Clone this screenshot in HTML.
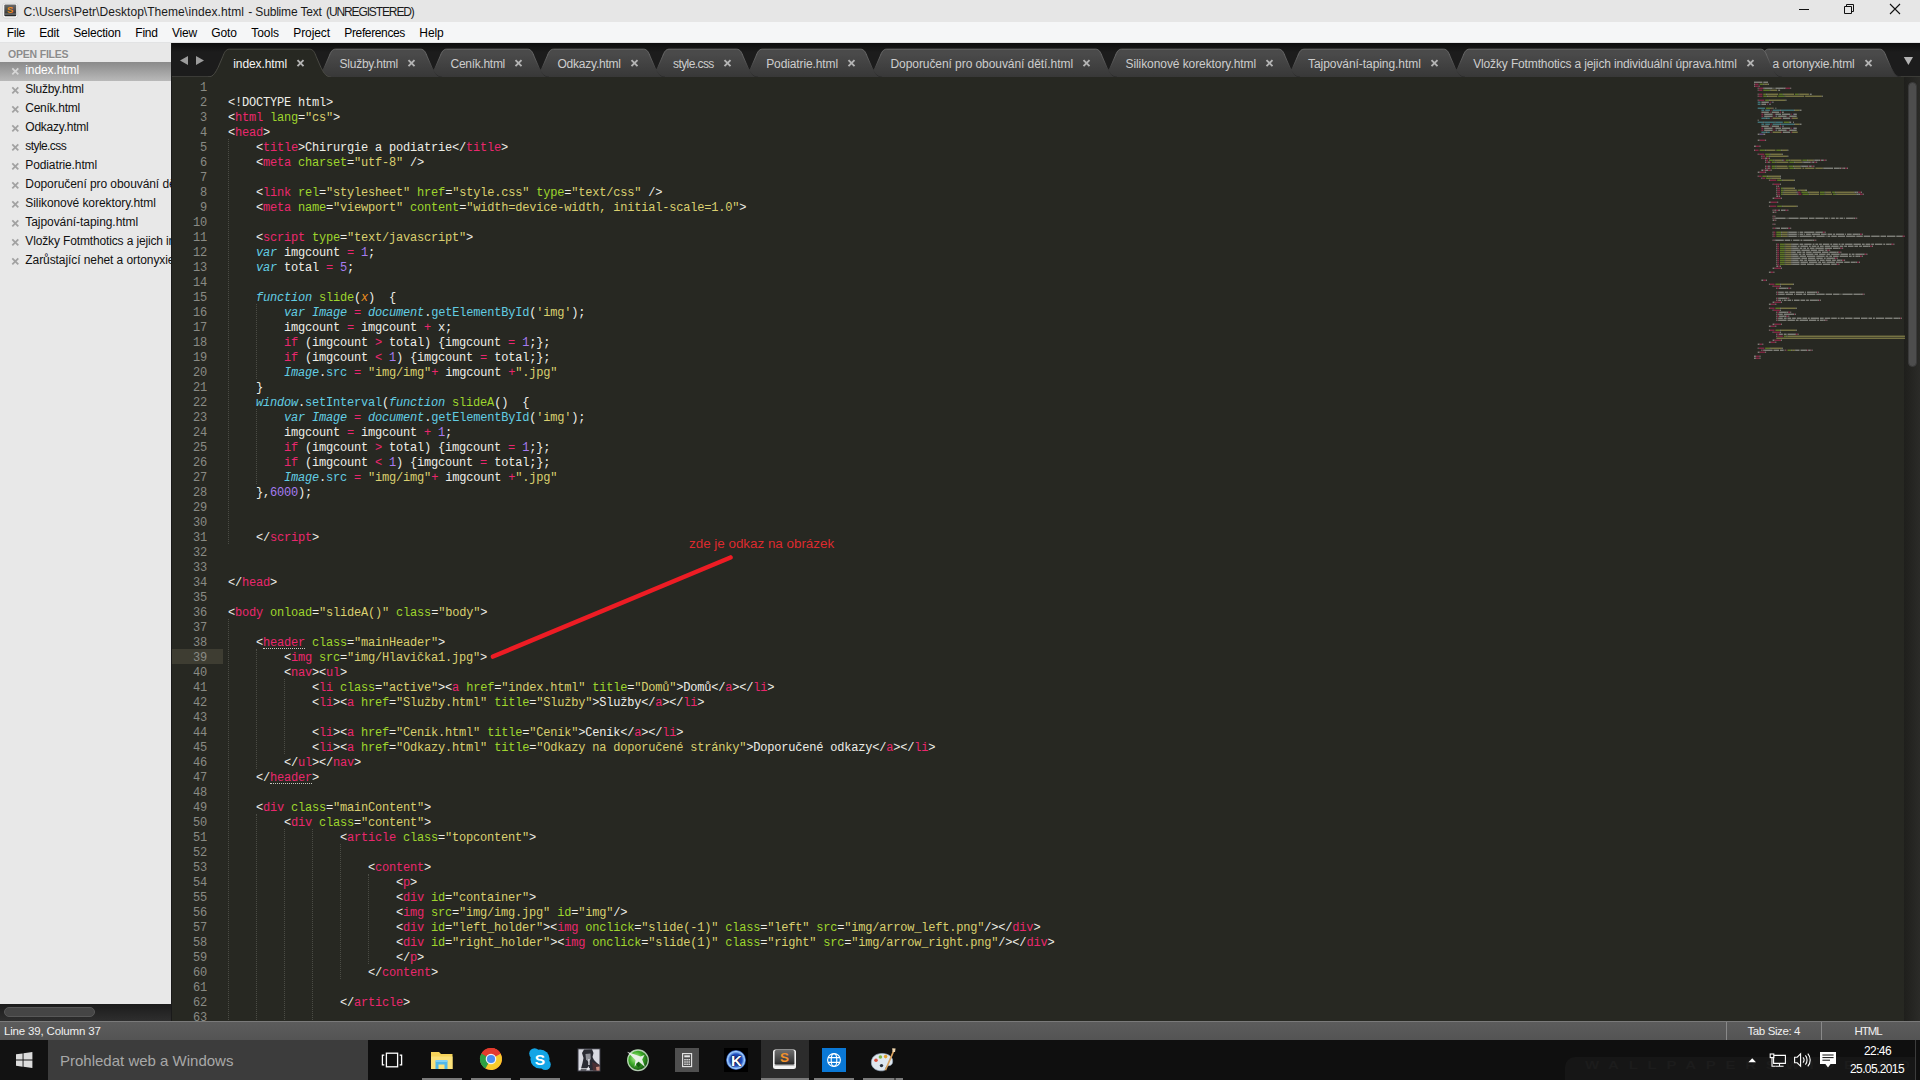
<!DOCTYPE html>
<html lang="cs">
<head>
<meta charset="utf-8">
<title>Sublime Text</title>
<style>
*{box-sizing:border-box;margin:0;padding:0}
html,body{width:1920px;height:1080px;overflow:hidden;background:#272822}
body{position:relative;font-family:"Liberation Sans",sans-serif;font-size:12px;color:#000}
.abs{position:absolute}
/* title bar */
#title{position:absolute;left:0;top:0;width:1920px;height:22px;background:#e6e6e6}
#title .txt{position:absolute;top:4px;font-size:12px;line-height:16px;color:#1a1a1a;white-space:pre}
#menu{position:absolute;left:0;top:22px;width:1920px;height:21px;background:#f5f6f7;border-bottom:1px solid #e2e3e4}
#menu span{position:absolute;top:3px;font-size:12px;line-height:16px;color:#000;white-space:nowrap}
/* sidebar */
#side{position:absolute;left:0;top:43px;width:171px;height:961px;background:#e8e8e8;overflow:hidden}
#side .hd{position:absolute;left:8px;top:4px;font-size:10.5px;line-height:14px;color:#8c8c8c;font-weight:bold;letter-spacing:-0.2px;white-space:nowrap;text-shadow:0 1px 0 #f4f4f4}
.sf{position:absolute;left:0;width:171px;height:19px;white-space:nowrap}
.sf.sel{background:linear-gradient(#8a8a8a,#9f9f9f 45%,#b9b9b9);height:19px}
.sf .sx{position:absolute;left:11.2px;top:5.2px;stroke:#a2a2a2;stroke-width:1.8;fill:none}
.sf .sn{position:absolute;left:25.3px;top:0.3px;font-size:12px;line-height:16px;color:#111}
.sf.sel .sn{color:#fff}
.sf.sel .sx{stroke:#d6d6d6}
#sidescroll{position:absolute;left:0;top:1004px;width:171px;height:17px;background:linear-gradient(#1c1c1c,#2e2e2e)}
#sidescroll i{position:absolute;left:4px;top:3px;width:91px;height:10px;border-radius:5px;background:#454545;border:1px solid #585858}
#sidesep{position:absolute;left:171px;top:43px;width:1px;height:978px;background:#1a1a1a}
/* tab bar */
#tabbar{position:absolute;left:172px;top:43px;width:1748px;height:34px;background:linear-gradient(#0d0d0d,#1c1c1c 9px,#1c1c1c);overflow:hidden}
#tabbar svg{position:absolute;left:0;top:0}
.tt{position:absolute;top:12.5px;font-size:12px;line-height:16px;white-space:nowrap}
.tx{position:absolute;top:11px;font-size:13px;line-height:16px;font-weight:bold;color:#b8b8b8}
/* editor */
#ed{position:absolute;left:172px;top:77px;width:1748px;height:944px;background:#272822;overflow:hidden}
.ln{position:absolute;left:0;height:15px;width:1580px;white-space:pre;font-family:"Liberation Mono",monospace;font-size:12px;letter-spacing:-0.2px;line-height:15px;color:#eeeee8}
.ln .no{position:absolute;left:0;top:2px;width:35px;text-align:right;color:#8a8b85}
.ln.cur::before{content:'';position:absolute;left:0;top:0;width:51px;height:15px;background:#3e3d32}
.ln .cd{position:absolute;left:56px;top:2px}
.t{color:#ea276d}.a{color:#9ed52d}.s{color:#dad06f}.k{color:#ea276d}.ki{color:#62cde2;font-style:italic}
.b{color:#62cde2}.g{color:#9ed52d}.o{color:#ee8f1f;font-style:italic}.n{color:#a67cf1}
.u{position:relative}
.u::after{content:'';position:absolute;left:0;right:0;top:12.3px;border-top:1px dotted #c8c8c0}
.gd{position:absolute;width:0;border-left:1px dotted #4b4c45}
/* status */
#status{position:absolute;left:0;top:1021px;width:1920px;height:19px;background:linear-gradient(#5c5c5c,#545454);border-top:1px solid #7a7a7a;color:#f0f0f0;font-size:11.5px}
#status span{position:absolute;top:1px;line-height:16px;white-space:nowrap}
#status i{position:absolute;top:0;width:1px;height:18px;background:#898989}
/* taskbar */
#task{position:absolute;left:0;top:1040px;width:1920px;height:40px;background:#0f0f0f}
#search{position:absolute;left:48px;top:0;width:320px;height:40px;background:#3c3c3c;color:#a8a8a8;font-size:15px;line-height:41px;padding-left:12px;white-space:nowrap}

#wc{position:absolute;left:0;top:0}
#anno{position:absolute;left:0;top:0;pointer-events:none}
#annot{position:absolute;left:689px;top:535px;font-size:13.4px;line-height:18px;color:#dc2a2e;white-space:nowrap}
#mini{position:absolute;left:1754px;top:79px}
#vtrack{position:absolute;left:1904px;top:77px;width:16px;height:944px;background:linear-gradient(90deg,#1f1f1c,#2b2b28)}
#vthumb{position:absolute;left:1908px;top:82px;width:9px;height:285px;border-radius:4.5px;background:#4d4d4d;border:1px solid #3a3a3a}
#tbi{position:absolute;left:0;top:0}
.clk{position:absolute;color:#fff;font-size:12px;line-height:14px;white-space:nowrap}
#wp{position:absolute;left:1565px;top:17px;width:350px;height:30px;border-radius:10px 0 0 0;background:#161616}
#wpt{position:absolute;left:1585px;top:20px;font-size:10px;letter-spacing:6.5px;color:#1c1c1c;font-weight:bold;white-space:nowrap;transform:scaleX(1.5);transform-origin:0 0}
</style>
</head>
<body>
<div id="title"><span class="txt" style="left:23.5px;letter-spacing:0.047px">C:\Users\Petr\Desktop\Theme\</span><span class="txt" style="left:188.4px;letter-spacing:0.091px">index.html</span><span class="txt" style="left:248.2px;letter-spacing:0.103px">-</span><span class="txt" style="left:255.3px;letter-spacing:-0.173px">Sublime Text</span><span class="txt" style="left:326.0px;letter-spacing:-1.117px">(UNREGISTERED)</span></div>
<svg id="wc" width="1920" height="23" viewBox="0 0 1920 23">
<defs><linearGradient id="sg" x1="0" y1="0" x2="0" y2="1"><stop offset="0" stop-color="#6a6a6a"/><stop offset="0.75" stop-color="#3a3a3a"/><stop offset="1" stop-color="#222"/></linearGradient></defs>
<rect x="2.8" y="3.3" width="14.9" height="14.7" rx="2.2" fill="#fdfdfd" stroke="#c4c4c4" stroke-width="0.6"/>
<rect x="4.3" y="4.6" width="11.9" height="11.6" rx="1" fill="url(#sg)"/>
<rect x="4.3" y="13.6" width="11.9" height="0.9" fill="#8e8e8e"/>
<text x="10.2" y="12.6" font-family="Liberation Sans, sans-serif" font-weight="bold" font-size="9.5" fill="#ef8a1e" text-anchor="middle">S</text>
<path d="M1799,9.5 H1809" stroke="#111" stroke-width="1"/>
<path d="M1844.5,6.5 H1851.5 V13.5 H1844.5 Z M1846.5,6.5 V4.5 H1853.5 V11.5 H1851.5" fill="none" stroke="#111" stroke-width="1"/>
<path d="M1890,4 L1900,14 M1900,4 L1890,14" stroke="#111" stroke-width="1.1"/>
</svg>
<div id="menu"><span style="left:6.8px;letter-spacing:-0.284px">File</span><span style="left:39.3px;letter-spacing:-0.245px">Edit</span><span style="left:73.3px;letter-spacing:-0.218px">Selection</span><span style="left:135.3px;letter-spacing:-0.236px">Find</span><span style="left:172.0px;letter-spacing:-0.198px">View</span><span style="left:211.3px;letter-spacing:-0.154px">Goto</span><span style="left:251.3px;letter-spacing:-0.063px">Tools</span><span style="left:293.3px;letter-spacing:-0.093px">Project</span><span style="left:344.3px;letter-spacing:-0.364px">Preferences</span><span style="left:419.3px;letter-spacing:-0.070px">Help</span></div>
<div id="side"><span class="hd">OPEN FILES</span>
<div class="sf sel" style="top:19px"><svg class="sx" width="9" height="9" viewBox="0 0 9 9"><path d="M1.3,1.3 L7.3,7.3 M7.3,1.3 L1.3,7.3"/></svg><span class="sn" style="letter-spacing:-0.099px">index.html</span></div>
<div class="sf" style="top:38px"><svg class="sx" width="9" height="9" viewBox="0 0 9 9"><path d="M1.3,1.3 L7.3,7.3 M7.3,1.3 L1.3,7.3"/></svg><span class="sn" style="letter-spacing:-0.239px">Služby.html</span></div>
<div class="sf" style="top:57px"><svg class="sx" width="9" height="9" viewBox="0 0 9 9"><path d="M1.3,1.3 L7.3,7.3 M7.3,1.3 L1.3,7.3"/></svg><span class="sn" style="letter-spacing:-0.285px">Ceník.html</span></div>
<div class="sf" style="top:76px"><svg class="sx" width="9" height="9" viewBox="0 0 9 9"><path d="M1.3,1.3 L7.3,7.3 M7.3,1.3 L1.3,7.3"/></svg><span class="sn" style="letter-spacing:-0.231px">Odkazy.html</span></div>
<div class="sf" style="top:95px"><svg class="sx" width="9" height="9" viewBox="0 0 9 9"><path d="M1.3,1.3 L7.3,7.3 M7.3,1.3 L1.3,7.3"/></svg><span class="sn" style="letter-spacing:-0.584px">style.css</span></div>
<div class="sf" style="top:114px"><svg class="sx" width="9" height="9" viewBox="0 0 9 9"><path d="M1.3,1.3 L7.3,7.3 M7.3,1.3 L1.3,7.3"/></svg><span class="sn" style="letter-spacing:-0.115px">Podiatrie.html</span></div>
<div class="sf" style="top:133px"><svg class="sx" width="9" height="9" viewBox="0 0 9 9"><path d="M1.3,1.3 L7.3,7.3 M7.3,1.3 L1.3,7.3"/></svg><span class="sn" style="letter-spacing:-0.069px">Doporučení pro obouvání dětí.html</span></div>
<div class="sf" style="top:152px"><svg class="sx" width="9" height="9" viewBox="0 0 9 9"><path d="M1.3,1.3 L7.3,7.3 M7.3,1.3 L1.3,7.3"/></svg><span class="sn" style="letter-spacing:-0.080px">Silikonové korektory.html</span></div>
<div class="sf" style="top:171px"><svg class="sx" width="9" height="9" viewBox="0 0 9 9"><path d="M1.3,1.3 L7.3,7.3 M7.3,1.3 L1.3,7.3"/></svg><span class="sn" style="letter-spacing:-0.062px">Tajpování-taping.html</span></div>
<div class="sf" style="top:190px"><svg class="sx" width="9" height="9" viewBox="0 0 9 9"><path d="M1.3,1.3 L7.3,7.3 M7.3,1.3 L1.3,7.3"/></svg><span class="sn" style="letter-spacing:-0.140px">Vložky Fotmthotics a jejich individuální úprava.html</span></div>
<div class="sf" style="top:209px"><svg class="sx" width="9" height="9" viewBox="0 0 9 9"><path d="M1.3,1.3 L7.3,7.3 M7.3,1.3 L1.3,7.3"/></svg><span class="sn" style="letter-spacing:-0.078px">Zarůstající nehet a ortonyxie.html</span></div>
</div>
<div id="sidescroll"><i></i></div>
<div id="sidesep"></div>
<div id="tabbar">
<svg width="1748" height="34" viewBox="0 0 1748 34">
<defs><linearGradient id="tg" x1="0" y1="0" x2="0" y2="1"><stop offset="0.17" stop-color="#4a4a4a"/><stop offset="1" stop-color="#383838"/></linearGradient><linearGradient id="ts" x1="0" y1="0" x2="0" y2="1"><stop offset="0.17" stop-color="#6a6a6a"/><stop offset="1" stop-color="#2a2a2a"/></linearGradient></defs>
<rect x="0" y="33" width="1748" height="1" fill="#3b3b37"/>
<path d="M8,17.5 L16,13 V22 Z M32,17.5 L24,13 V22 Z" fill="#9c9c9c"/>
<path d="M1731.8,14 H1741 L1736.4,22 Z" fill="#b4b4b4"/>
<path d="M1575.2,34.0 C1581.2,34.0 1583.2,28.0 1585.4,24.2 L1589.9,13.8 C1591.7,9.0 1593.2,6.2 1596.5,6.2 L1707.7,6.2 C1711.0,6.2 1712.5,9.0 1714.3,13.8 L1718.8,24.2 C1721.0,28.0 1723.0,34.0 1729.0,34.0 Z" fill="url(#tg)"/>
<path d="M1575.2,34.0 C1581.2,34.0 1583.2,28.0 1585.4,24.2 L1589.9,13.8 C1591.7,9.0 1593.2,6.2 1596.5,6.2 L1707.7,6.2 C1711.0,6.2 1712.5,9.0 1714.3,13.8 L1718.8,24.2 C1721.0,28.0 1723.0,34.0 1729.0,34.0" fill="none" stroke="url(#ts)" stroke-width="1"/>
<path d="M1276.0,34.0 C1282.0,34.0 1284.0,28.0 1286.2,24.2 L1290.7,13.8 C1292.5,9.0 1294.0,6.2 1297.2,6.2 L1588.7,6.2 C1592.0,6.2 1593.5,9.0 1595.3,13.8 L1599.8,24.2 C1602.0,28.0 1604.0,34.0 1610.0,34.0 Z" fill="url(#tg)"/>
<path d="M1276.0,34.0 C1282.0,34.0 1284.0,28.0 1286.2,24.2 L1290.7,13.8 C1292.5,9.0 1294.0,6.2 1297.2,6.2 L1588.7,6.2 C1592.0,6.2 1593.5,9.0 1595.3,13.8 L1599.8,24.2 C1602.0,28.0 1604.0,34.0 1610.0,34.0" fill="none" stroke="url(#ts)" stroke-width="1"/>
<path d="M1110.7,34.0 C1116.7,34.0 1118.7,28.0 1120.9,24.2 L1125.4,13.8 C1127.2,9.0 1128.7,6.2 1132.0,6.2 L1271.7,6.2 C1275.0,6.2 1276.5,9.0 1278.3,13.8 L1282.8,24.2 C1285.0,28.0 1287.0,34.0 1293.0,34.0 Z" fill="url(#tg)"/>
<path d="M1110.7,34.0 C1116.7,34.0 1118.7,28.0 1120.9,24.2 L1125.4,13.8 C1127.2,9.0 1128.7,6.2 1132.0,6.2 L1271.7,6.2 C1275.0,6.2 1276.5,9.0 1278.3,13.8 L1282.8,24.2 C1285.0,28.0 1287.0,34.0 1293.0,34.0" fill="none" stroke="url(#ts)" stroke-width="1"/>
<path d="M928.2,34.0 C934.2,34.0 936.2,28.0 938.4,24.2 L942.9,13.8 C944.7,9.0 946.2,6.2 949.5,6.2 L1106.7,6.2 C1110.0,6.2 1111.5,9.0 1113.3,13.8 L1117.8,24.2 C1120.0,28.0 1122.0,34.0 1128.0,34.0 Z" fill="url(#tg)"/>
<path d="M928.2,34.0 C934.2,34.0 936.2,28.0 938.4,24.2 L942.9,13.8 C944.7,9.0 946.2,6.2 949.5,6.2 L1106.7,6.2 C1110.0,6.2 1111.5,9.0 1113.3,13.8 L1117.8,24.2 C1120.0,28.0 1122.0,34.0 1128.0,34.0" fill="none" stroke="url(#ts)" stroke-width="1"/>
<path d="M693.2,34.0 C699.2,34.0 701.2,28.0 703.4,24.2 L707.9,13.8 C709.7,9.0 711.2,6.2 714.5,6.2 L923.7,6.2 C927.0,6.2 928.5,9.0 930.3,13.8 L934.8,24.2 C937.0,28.0 939.0,34.0 945.0,34.0 Z" fill="url(#tg)"/>
<path d="M693.2,34.0 C699.2,34.0 701.2,28.0 703.4,24.2 L707.9,13.8 C709.7,9.0 711.2,6.2 714.5,6.2 L923.7,6.2 C927.0,6.2 928.5,9.0 930.3,13.8 L934.8,24.2 C937.0,28.0 939.0,34.0 945.0,34.0" fill="none" stroke="url(#ts)" stroke-width="1"/>
<path d="M569.0,34.0 C575.0,34.0 577.0,28.0 579.2,24.2 L583.7,13.8 C585.5,9.0 587.0,6.2 590.2,6.2 L688.7,6.2 C692.0,6.2 693.5,9.0 695.3,13.8 L699.8,24.2 C702.0,28.0 704.0,34.0 710.0,34.0 Z" fill="url(#tg)"/>
<path d="M569.0,34.0 C575.0,34.0 577.0,28.0 579.2,24.2 L583.7,13.8 C585.5,9.0 587.0,6.2 590.2,6.2 L688.7,6.2 C692.0,6.2 693.5,9.0 695.3,13.8 L699.8,24.2 C702.0,28.0 704.0,34.0 710.0,34.0" fill="none" stroke="url(#ts)" stroke-width="1"/>
<path d="M475.7,34.0 C481.7,34.0 483.7,28.0 485.9,24.2 L490.4,13.8 C492.2,9.0 493.7,6.2 497.0,6.2 L564.7,6.2 C568.0,6.2 569.5,9.0 571.3,13.8 L575.8,24.2 C578.0,28.0 580.0,34.0 586.0,34.0 Z" fill="url(#tg)"/>
<path d="M475.7,34.0 C481.7,34.0 483.7,28.0 485.9,24.2 L490.4,13.8 C492.2,9.0 493.7,6.2 497.0,6.2 L564.7,6.2 C568.0,6.2 569.5,9.0 571.3,13.8 L575.8,24.2 C578.0,28.0 580.0,34.0 586.0,34.0" fill="none" stroke="url(#ts)" stroke-width="1"/>
<path d="M360.2,34.0 C366.2,34.0 368.2,28.0 370.4,24.2 L374.9,13.8 C376.7,9.0 378.2,6.2 381.5,6.2 L471.7,6.2 C475.0,6.2 476.5,9.0 478.3,13.8 L482.8,24.2 C485.0,28.0 487.0,34.0 493.0,34.0 Z" fill="url(#tg)"/>
<path d="M360.2,34.0 C366.2,34.0 368.2,28.0 370.4,24.2 L374.9,13.8 C376.7,9.0 378.2,6.2 381.5,6.2 L471.7,6.2 C475.0,6.2 476.5,9.0 478.3,13.8 L482.8,24.2 C485.0,28.0 487.0,34.0 493.0,34.0" fill="none" stroke="url(#ts)" stroke-width="1"/>
<path d="M253.2,34.0 C259.2,34.0 261.2,28.0 263.4,24.2 L267.9,13.8 C269.7,9.0 271.2,6.2 274.5,6.2 L355.7,6.2 C359.0,6.2 360.5,9.0 362.3,13.8 L366.8,24.2 C369.0,28.0 371.0,34.0 377.0,34.0 Z" fill="url(#tg)"/>
<path d="M253.2,34.0 C259.2,34.0 261.2,28.0 263.4,24.2 L267.9,13.8 C269.7,9.0 271.2,6.2 274.5,6.2 L355.7,6.2 C359.0,6.2 360.5,9.0 362.3,13.8 L366.8,24.2 C369.0,28.0 371.0,34.0 377.0,34.0" fill="none" stroke="url(#ts)" stroke-width="1"/>
<path d="M142.2,34.0 C148.2,34.0 150.2,28.0 152.4,24.2 L156.9,13.8 C158.7,9.0 160.2,6.2 163.5,6.2 L248.7,6.2 C252.0,6.2 253.5,9.0 255.3,13.8 L259.8,24.2 C262.0,28.0 264.0,34.0 270.0,34.0 Z" fill="url(#tg)"/>
<path d="M142.2,34.0 C148.2,34.0 150.2,28.0 152.4,24.2 L156.9,13.8 C158.7,9.0 160.2,6.2 163.5,6.2 L248.7,6.2 C252.0,6.2 253.5,9.0 255.3,13.8 L259.8,24.2 C262.0,28.0 264.0,34.0 270.0,34.0" fill="none" stroke="url(#ts)" stroke-width="1"/>
<path d="M36.0,34.0 C42.0,34.0 44.0,28.0 46.2,24.2 L50.7,13.8 C52.5,9.0 54.0,6.2 57.3,6.2 L137.7,6.2 C141.0,6.2 142.5,9.0 144.3,13.8 L148.8,24.2 C151.0,28.0 153.0,34.0 159.0,34.0 Z" fill="#272822"/>
<path d="M36.0,34.0 C42.0,34.0 44.0,28.0 46.2,24.2 L50.7,13.8 C52.5,9.0 54.0,6.2 57.3,6.2 L137.7,6.2 C141.0,6.2 142.5,9.0 144.3,13.8 L148.8,24.2 C151.0,28.0 153.0,34.0 159.0,34.0" fill="none" stroke="#4a4a44" stroke-width="1"/>
<g stroke="#b4b4b4" stroke-width="1.9" fill="none"><path d="M125.5,17.2 l6,6 m0,-6 l-6,6"/><path d="M236.5,17.2 l6,6 m0,-6 l-6,6"/><path d="M343.5,17.2 l6,6 m0,-6 l-6,6"/><path d="M459.5,17.2 l6,6 m0,-6 l-6,6"/><path d="M552.5,17.2 l6,6 m0,-6 l-6,6"/><path d="M676.5,17.2 l6,6 m0,-6 l-6,6"/><path d="M911.5,17.2 l6,6 m0,-6 l-6,6"/><path d="M1094.5,17.2 l6,6 m0,-6 l-6,6"/><path d="M1259.5,17.2 l6,6 m0,-6 l-6,6"/><path d="M1575.5,17.2 l6,6 m0,-6 l-6,6"/><path d="M1693.5,17.2 l6,6 m0,-6 l-6,6"/></g>
</svg>
<span class="tt" style="left:61.3px;color:#f4f4f4;letter-spacing:-0.099px">index.html</span>
<span class="tt" style="left:167.5px;color:#cdcdcd;letter-spacing:-0.239px">Služby.html</span>
<span class="tt" style="left:278.5px;color:#cdcdcd;letter-spacing:-0.285px">Ceník.html</span>
<span class="tt" style="left:385.5px;color:#cdcdcd;letter-spacing:-0.231px">Odkazy.html</span>
<span class="tt" style="left:501.0px;color:#cdcdcd;letter-spacing:-0.584px">style.css</span>
<span class="tt" style="left:594.2px;color:#cdcdcd;letter-spacing:-0.115px">Podiatrie.html</span>
<span class="tt" style="left:718.5px;color:#cdcdcd;letter-spacing:-0.069px">Doporučení pro obouvání dětí.html</span>
<span class="tt" style="left:953.5px;color:#cdcdcd;letter-spacing:-0.080px">Silikonové korektory.html</span>
<span class="tt" style="left:1136.0px;color:#cdcdcd;letter-spacing:-0.062px">Tajpování-taping.html</span>
<span class="tt" style="left:1301.2px;color:#cdcdcd;letter-spacing:-0.140px">Vložky Fotmthotics a jejich individuální úprava.html</span>
<span class="tt" style="left:1600.5px;color:#cdcdcd;letter-spacing:-0.169px">a ortonyxie.html</span>
</div>
<div id="ed">
<div class="gd" style="left:56px;top:62px;height:405px"></div>
<div class="gd" style="left:84px;top:227px;height:75px"></div>
<div class="gd" style="left:84px;top:332px;height:75px"></div>
<div class="gd" style="left:56px;top:542px;height:405px"></div>
<div class="gd" style="left:84px;top:572px;height:120px"></div>
<div class="gd" style="left:112px;top:602px;height:75px"></div>
<div class="gd" style="left:84px;top:737px;height:210px"></div>
<div class="gd" style="left:112px;top:752px;height:195px"></div>
<div class="gd" style="left:140px;top:752px;height:195px"></div>
<div class="gd" style="left:168px;top:767px;height:135px"></div>
<div class="gd" style="left:196px;top:797px;height:90px"></div>
<div class="ln" style="top:2px"><span class="no">1</span><span class="cd"></span></div>
<div class="ln" style="top:17px"><span class="no">2</span><span class="cd">&lt;!DOCTYPE html&gt;</span></div>
<div class="ln" style="top:32px"><span class="no">3</span><span class="cd">&lt;<span class="t">html</span> <span class="a">lang</span>=<span class="s">"cs"</span>&gt;</span></div>
<div class="ln" style="top:47px"><span class="no">4</span><span class="cd">&lt;<span class="t">head</span>&gt;</span></div>
<div class="ln" style="top:62px"><span class="no">5</span><span class="cd">    &lt;<span class="t">title</span>&gt;Chirurgie a podiatrie&lt;/<span class="t">title</span>&gt;</span></div>
<div class="ln" style="top:77px"><span class="no">6</span><span class="cd">    &lt;<span class="t">meta</span> <span class="a">charset</span>=<span class="s">"utf-8"</span> /&gt;</span></div>
<div class="ln" style="top:92px"><span class="no">7</span><span class="cd"></span></div>
<div class="ln" style="top:107px"><span class="no">8</span><span class="cd">    &lt;<span class="t">link</span> <span class="a">rel</span>=<span class="s">"stylesheet"</span> <span class="a">href</span>=<span class="s">"style.css"</span> <span class="a">type</span>=<span class="s">"text/css"</span> /&gt;</span></div>
<div class="ln" style="top:122px"><span class="no">9</span><span class="cd">    &lt;<span class="t">meta</span> <span class="a">name</span>=<span class="s">"viewport"</span> <span class="a">content</span>=<span class="s">"width=device-width, initial-scale=1.0"</span>&gt;</span></div>
<div class="ln" style="top:137px"><span class="no">10</span><span class="cd"></span></div>
<div class="ln" style="top:152px"><span class="no">11</span><span class="cd">    &lt;<span class="t">script</span> <span class="a">type</span>=<span class="s">"text/javascript"</span>&gt;</span></div>
<div class="ln" style="top:167px"><span class="no">12</span><span class="cd">    <span class="ki">var</span> imgcount <span class="k">=</span> <span class="n">1</span>;</span></div>
<div class="ln" style="top:182px"><span class="no">13</span><span class="cd">    <span class="ki">var</span> total <span class="k">=</span> <span class="n">5</span>;</span></div>
<div class="ln" style="top:197px"><span class="no">14</span><span class="cd"></span></div>
<div class="ln" style="top:212px"><span class="no">15</span><span class="cd">    <span class="ki">function</span> <span class="g">slide</span>(<span class="o">x</span>)  {</span></div>
<div class="ln" style="top:227px"><span class="no">16</span><span class="cd">        <span class="ki">var</span> <span class="ki">Image</span> <span class="k">=</span> <span class="ki">document</span>.<span class="b">getElementById</span>(<span class="s">'img'</span>);</span></div>
<div class="ln" style="top:242px"><span class="no">17</span><span class="cd">        imgcount <span class="k">=</span> imgcount <span class="k">+</span> x;</span></div>
<div class="ln" style="top:257px"><span class="no">18</span><span class="cd">        <span class="k">if</span> (imgcount <span class="k">&gt;</span> total) {imgcount <span class="k">=</span> <span class="n">1</span>;};</span></div>
<div class="ln" style="top:272px"><span class="no">19</span><span class="cd">        <span class="k">if</span> (imgcount <span class="k">&lt;</span> <span class="n">1</span>) {imgcount <span class="k">=</span> total;};</span></div>
<div class="ln" style="top:287px"><span class="no">20</span><span class="cd">        <span class="ki">Image</span>.<span class="b">src</span> <span class="k">=</span> <span class="s">"img/img"</span><span class="k">+</span> imgcount <span class="k">+</span><span class="s">".jpg"</span></span></div>
<div class="ln" style="top:302px"><span class="no">21</span><span class="cd">    }</span></div>
<div class="ln" style="top:317px"><span class="no">22</span><span class="cd">    <span class="ki">window</span>.<span class="b">setInterval</span>(<span class="ki">function</span> <span class="g">slideA</span>()  {</span></div>
<div class="ln" style="top:332px"><span class="no">23</span><span class="cd">        <span class="ki">var</span> <span class="ki">Image</span> <span class="k">=</span> <span class="ki">document</span>.<span class="b">getElementById</span>(<span class="s">'img'</span>);</span></div>
<div class="ln" style="top:347px"><span class="no">24</span><span class="cd">        imgcount <span class="k">=</span> imgcount <span class="k">+</span> <span class="n">1</span>;</span></div>
<div class="ln" style="top:362px"><span class="no">25</span><span class="cd">        <span class="k">if</span> (imgcount <span class="k">&gt;</span> total) {imgcount <span class="k">=</span> <span class="n">1</span>;};</span></div>
<div class="ln" style="top:377px"><span class="no">26</span><span class="cd">        <span class="k">if</span> (imgcount <span class="k">&lt;</span> <span class="n">1</span>) {imgcount <span class="k">=</span> total;};</span></div>
<div class="ln" style="top:392px"><span class="no">27</span><span class="cd">        <span class="ki">Image</span>.<span class="b">src</span> <span class="k">=</span> <span class="s">"img/img"</span><span class="k">+</span> imgcount <span class="k">+</span><span class="s">".jpg"</span></span></div>
<div class="ln" style="top:407px"><span class="no">28</span><span class="cd">    },<span class="n">6000</span>);</span></div>
<div class="ln" style="top:422px"><span class="no">29</span><span class="cd"></span></div>
<div class="ln" style="top:437px"><span class="no">30</span><span class="cd"></span></div>
<div class="ln" style="top:452px"><span class="no">31</span><span class="cd">    &lt;/<span class="t">script</span>&gt;</span></div>
<div class="ln" style="top:467px"><span class="no">32</span><span class="cd"></span></div>
<div class="ln" style="top:482px"><span class="no">33</span><span class="cd"></span></div>
<div class="ln" style="top:497px"><span class="no">34</span><span class="cd">&lt;/<span class="t">head</span>&gt;</span></div>
<div class="ln" style="top:512px"><span class="no">35</span><span class="cd"></span></div>
<div class="ln" style="top:527px"><span class="no">36</span><span class="cd">&lt;<span class="t">body</span> <span class="a">onload</span>=<span class="s">"slideA()"</span> <span class="a">class</span>=<span class="s">"body"</span>&gt;</span></div>
<div class="ln" style="top:542px"><span class="no">37</span><span class="cd"></span></div>
<div class="ln" style="top:557px"><span class="no">38</span><span class="cd">    &lt;<span class="t u">header</span> <span class="a">class</span>=<span class="s">"mainHeader"</span>&gt;</span></div>
<div class="ln cur" style="top:572px"><span class="no">39</span><span class="cd">        &lt;<span class="t">img</span> <span class="a">src</span>=<span class="s">"img/Hlavička1.jpg"</span>&gt;</span></div>
<div class="ln" style="top:587px"><span class="no">40</span><span class="cd">        &lt;<span class="t">nav</span>&gt;&lt;<span class="t">ul</span>&gt;</span></div>
<div class="ln" style="top:602px"><span class="no">41</span><span class="cd">            &lt;<span class="t">li</span> <span class="a">class</span>=<span class="s">"active"</span>&gt;&lt;<span class="t">a</span> <span class="a">href</span>=<span class="s">"index.html"</span> <span class="a">title</span>=<span class="s">"Domů"</span>&gt;Domů&lt;/<span class="t">a</span>&gt;&lt;/<span class="t">li</span>&gt;</span></div>
<div class="ln" style="top:617px"><span class="no">42</span><span class="cd">            &lt;<span class="t">li</span>&gt;&lt;<span class="t">a</span> <span class="a">href</span>=<span class="s">"Služby.html"</span> <span class="a">title</span>=<span class="s">"Služby"</span>&gt;Služby&lt;/<span class="t">a</span>&gt;&lt;/<span class="t">li</span>&gt;</span></div>
<div class="ln" style="top:632px"><span class="no">43</span><span class="cd"></span></div>
<div class="ln" style="top:647px"><span class="no">44</span><span class="cd">            &lt;<span class="t">li</span>&gt;&lt;<span class="t">a</span> <span class="a">href</span>=<span class="s">"Ceník.html"</span> <span class="a">title</span>=<span class="s">"Ceník"</span>&gt;Ceník&lt;/<span class="t">a</span>&gt;&lt;/<span class="t">li</span>&gt;</span></div>
<div class="ln" style="top:662px"><span class="no">45</span><span class="cd">            &lt;<span class="t">li</span>&gt;&lt;<span class="t">a</span> <span class="a">href</span>=<span class="s">"Odkazy.html"</span> <span class="a">title</span>=<span class="s">"Odkazy na doporučené stránky"</span>&gt;Doporučené odkazy&lt;/<span class="t">a</span>&gt;&lt;/<span class="t">li</span>&gt;</span></div>
<div class="ln" style="top:677px"><span class="no">46</span><span class="cd">        &lt;/<span class="t">ul</span>&gt;&lt;/<span class="t">nav</span>&gt;</span></div>
<div class="ln" style="top:692px"><span class="no">47</span><span class="cd">    &lt;/<span class="t u">header</span>&gt;</span></div>
<div class="ln" style="top:707px"><span class="no">48</span><span class="cd"></span></div>
<div class="ln" style="top:722px"><span class="no">49</span><span class="cd">    &lt;<span class="t">div</span> <span class="a">class</span>=<span class="s">"mainContent"</span>&gt;</span></div>
<div class="ln" style="top:737px"><span class="no">50</span><span class="cd">        &lt;<span class="t">div</span> <span class="a">class</span>=<span class="s">"content"</span>&gt;</span></div>
<div class="ln" style="top:752px"><span class="no">51</span><span class="cd">                &lt;<span class="t">article</span> <span class="a">class</span>=<span class="s">"topcontent"</span>&gt;</span></div>
<div class="ln" style="top:767px"><span class="no">52</span><span class="cd"></span></div>
<div class="ln" style="top:782px"><span class="no">53</span><span class="cd">                    &lt;<span class="t">content</span>&gt;</span></div>
<div class="ln" style="top:797px"><span class="no">54</span><span class="cd">                        &lt;<span class="t">p</span>&gt;</span></div>
<div class="ln" style="top:812px"><span class="no">55</span><span class="cd">                        &lt;<span class="t">div</span> <span class="a">id</span>=<span class="s">"container"</span>&gt;</span></div>
<div class="ln" style="top:827px"><span class="no">56</span><span class="cd">                        &lt;<span class="t">img</span> <span class="a">src</span>=<span class="s">"img/img.jpg"</span> <span class="a">id</span>=<span class="s">"img"</span>/&gt;</span></div>
<div class="ln" style="top:842px"><span class="no">57</span><span class="cd">                        &lt;<span class="t">div</span> <span class="a">id</span>=<span class="s">"left_holder"</span>&gt;&lt;<span class="t">img</span> <span class="a">onclick</span>=<span class="s">"slide(-1)"</span> <span class="a">class</span>=<span class="s">"left"</span> <span class="a">src</span>=<span class="s">"img/arrow_left.png"</span>/&gt;&lt;/<span class="t">div</span>&gt;</span></div>
<div class="ln" style="top:857px"><span class="no">58</span><span class="cd">                        &lt;<span class="t">div</span> <span class="a">id</span>=<span class="s">"right_holder"</span>&gt;&lt;<span class="t">img</span> <span class="a">onclick</span>=<span class="s">"slide(1)"</span> <span class="a">class</span>=<span class="s">"right"</span> <span class="a">src</span>=<span class="s">"img/arrow_right.png"</span>/&gt;&lt;/<span class="t">div</span>&gt;</span></div>
<div class="ln" style="top:872px"><span class="no">59</span><span class="cd">                        &lt;/<span class="t">p</span>&gt;</span></div>
<div class="ln" style="top:887px"><span class="no">60</span><span class="cd">                    &lt;/<span class="t">content</span>&gt;</span></div>
<div class="ln" style="top:902px"><span class="no">61</span><span class="cd"></span></div>
<div class="ln" style="top:917px"><span class="no">62</span><span class="cd">                &lt;/<span class="t">article</span>&gt;</span></div>
<div class="ln" style="top:932px"><span class="no">63</span><span class="cd"></span></div>
</div>
<svg id="anno" width="1920" height="1080" viewBox="0 0 1920 1080"><path d="M493,656.5 L730.5,557.5" stroke="#ed1c24" stroke-width="4.6" stroke-linecap="round" fill="none"/></svg>
<span id="annot">zde je odkaz na obrázek</span>
<div id="vtrack"></div><div id="vthumb"></div>
<svg id="mini" width="151" height="284" viewBox="0 0 151 284" opacity="0.46"><rect x="0.0" y="2.6" width="8.4" height="1.3" fill="#f8f8f2"/><rect x="9.3" y="2.6" width="4.7" height="1.3" fill="#f8f8f2"/><rect x="0.0" y="4.6" width="0.9" height="1.3" fill="#f8f8f2"/><rect x="0.9" y="4.6" width="3.7" height="1.3" fill="#f92672"/><rect x="5.6" y="4.6" width="3.7" height="1.3" fill="#a6e22e"/><rect x="9.3" y="4.6" width="0.9" height="1.3" fill="#f8f8f2"/><rect x="10.2" y="4.6" width="3.7" height="1.3" fill="#e6db74"/><rect x="14.0" y="4.6" width="0.9" height="1.3" fill="#f8f8f2"/><rect x="0.0" y="6.6" width="0.9" height="1.3" fill="#f8f8f2"/><rect x="0.9" y="6.6" width="3.7" height="1.3" fill="#f92672"/><rect x="4.7" y="6.6" width="0.9" height="1.3" fill="#f8f8f2"/><rect x="3.7" y="8.6" width="0.9" height="1.3" fill="#f8f8f2"/><rect x="4.7" y="8.6" width="4.7" height="1.3" fill="#f92672"/><rect x="9.3" y="8.6" width="0.9" height="1.3" fill="#f8f8f2"/><rect x="10.2" y="8.6" width="8.4" height="1.3" fill="#f8f8f2"/><rect x="19.5" y="8.6" width="0.9" height="1.3" fill="#f8f8f2"/><rect x="21.4" y="8.6" width="8.4" height="1.3" fill="#f8f8f2"/><rect x="29.8" y="8.6" width="1.9" height="1.3" fill="#f8f8f2"/><rect x="31.6" y="8.6" width="4.7" height="1.3" fill="#f92672"/><rect x="36.3" y="8.6" width="0.9" height="1.3" fill="#f8f8f2"/><rect x="3.7" y="10.6" width="0.9" height="1.3" fill="#f8f8f2"/><rect x="4.7" y="10.6" width="3.7" height="1.3" fill="#f92672"/><rect x="9.3" y="10.6" width="6.5" height="1.3" fill="#a6e22e"/><rect x="15.8" y="10.6" width="0.9" height="1.3" fill="#f8f8f2"/><rect x="16.7" y="10.6" width="6.5" height="1.3" fill="#e6db74"/><rect x="24.2" y="10.6" width="1.9" height="1.3" fill="#f8f8f2"/><rect x="3.7" y="14.6" width="0.9" height="1.3" fill="#f8f8f2"/><rect x="4.7" y="14.6" width="3.7" height="1.3" fill="#f92672"/><rect x="9.3" y="14.6" width="2.8" height="1.3" fill="#a6e22e"/><rect x="12.1" y="14.6" width="0.9" height="1.3" fill="#f8f8f2"/><rect x="13.0" y="14.6" width="11.2" height="1.3" fill="#e6db74"/><rect x="25.1" y="14.6" width="3.7" height="1.3" fill="#a6e22e"/><rect x="28.8" y="14.6" width="0.9" height="1.3" fill="#f8f8f2"/><rect x="29.8" y="14.6" width="10.2" height="1.3" fill="#e6db74"/><rect x="40.9" y="14.6" width="3.7" height="1.3" fill="#a6e22e"/><rect x="44.6" y="14.6" width="0.9" height="1.3" fill="#f8f8f2"/><rect x="45.6" y="14.6" width="9.3" height="1.3" fill="#e6db74"/><rect x="55.8" y="14.6" width="1.9" height="1.3" fill="#f8f8f2"/><rect x="3.7" y="16.6" width="0.9" height="1.3" fill="#f8f8f2"/><rect x="4.7" y="16.6" width="3.7" height="1.3" fill="#f92672"/><rect x="9.3" y="16.6" width="3.7" height="1.3" fill="#a6e22e"/><rect x="13.0" y="16.6" width="0.9" height="1.3" fill="#f8f8f2"/><rect x="14.0" y="16.6" width="9.3" height="1.3" fill="#e6db74"/><rect x="24.2" y="16.6" width="6.5" height="1.3" fill="#a6e22e"/><rect x="30.7" y="16.6" width="0.9" height="1.3" fill="#f8f8f2"/><rect x="31.6" y="16.6" width="18.6" height="1.3" fill="#e6db74"/><rect x="51.1" y="16.6" width="16.7" height="1.3" fill="#e6db74"/><rect x="67.9" y="16.6" width="0.9" height="1.3" fill="#f8f8f2"/><rect x="3.7" y="20.6" width="0.9" height="1.3" fill="#f8f8f2"/><rect x="4.7" y="20.6" width="5.6" height="1.3" fill="#f92672"/><rect x="11.2" y="20.6" width="3.7" height="1.3" fill="#a6e22e"/><rect x="14.9" y="20.6" width="0.9" height="1.3" fill="#f8f8f2"/><rect x="15.8" y="20.6" width="15.8" height="1.3" fill="#e6db74"/><rect x="31.6" y="20.6" width="0.9" height="1.3" fill="#f8f8f2"/><rect x="3.7" y="22.6" width="2.8" height="1.3" fill="#66d9ef"/><rect x="7.4" y="22.6" width="7.4" height="1.3" fill="#f8f8f2"/><rect x="15.8" y="22.6" width="0.9" height="1.3" fill="#f92672"/><rect x="17.7" y="22.6" width="0.9" height="1.3" fill="#ae81ff"/><rect x="18.6" y="22.6" width="0.9" height="1.3" fill="#f8f8f2"/><rect x="3.7" y="24.6" width="2.8" height="1.3" fill="#66d9ef"/><rect x="7.4" y="24.6" width="4.7" height="1.3" fill="#f8f8f2"/><rect x="13.0" y="24.6" width="0.9" height="1.3" fill="#f92672"/><rect x="14.9" y="24.6" width="0.9" height="1.3" fill="#ae81ff"/><rect x="15.8" y="24.6" width="0.9" height="1.3" fill="#f8f8f2"/><rect x="3.7" y="28.6" width="7.4" height="1.3" fill="#66d9ef"/><rect x="12.1" y="28.6" width="4.7" height="1.3" fill="#a6e22e"/><rect x="16.7" y="28.6" width="0.9" height="1.3" fill="#f8f8f2"/><rect x="17.7" y="28.6" width="0.9" height="1.3" fill="#fd971f"/><rect x="18.6" y="28.6" width="0.9" height="1.3" fill="#f8f8f2"/><rect x="21.4" y="28.6" width="0.9" height="1.3" fill="#f8f8f2"/><rect x="7.4" y="30.6" width="2.8" height="1.3" fill="#66d9ef"/><rect x="11.2" y="30.6" width="4.7" height="1.3" fill="#66d9ef"/><rect x="16.7" y="30.6" width="0.9" height="1.3" fill="#f92672"/><rect x="18.6" y="30.6" width="7.4" height="1.3" fill="#66d9ef"/><rect x="26.0" y="30.6" width="0.9" height="1.3" fill="#f8f8f2"/><rect x="27.0" y="30.6" width="13.0" height="1.3" fill="#66d9ef"/><rect x="40.0" y="30.6" width="0.9" height="1.3" fill="#f8f8f2"/><rect x="40.9" y="30.6" width="4.7" height="1.3" fill="#e6db74"/><rect x="45.6" y="30.6" width="1.9" height="1.3" fill="#f8f8f2"/><rect x="7.4" y="32.6" width="7.4" height="1.3" fill="#f8f8f2"/><rect x="15.8" y="32.6" width="0.9" height="1.3" fill="#f92672"/><rect x="17.7" y="32.6" width="7.4" height="1.3" fill="#f8f8f2"/><rect x="26.0" y="32.6" width="0.9" height="1.3" fill="#f92672"/><rect x="27.9" y="32.6" width="1.9" height="1.3" fill="#f8f8f2"/><rect x="7.4" y="34.6" width="1.9" height="1.3" fill="#f92672"/><rect x="10.2" y="34.6" width="8.4" height="1.3" fill="#f8f8f2"/><rect x="19.5" y="34.6" width="0.9" height="1.3" fill="#f92672"/><rect x="21.4" y="34.6" width="5.6" height="1.3" fill="#f8f8f2"/><rect x="27.9" y="34.6" width="8.4" height="1.3" fill="#f8f8f2"/><rect x="37.2" y="34.6" width="0.9" height="1.3" fill="#f92672"/><rect x="39.1" y="34.6" width="0.9" height="1.3" fill="#ae81ff"/><rect x="40.0" y="34.6" width="2.8" height="1.3" fill="#f8f8f2"/><rect x="7.4" y="36.6" width="1.9" height="1.3" fill="#f92672"/><rect x="10.2" y="36.6" width="8.4" height="1.3" fill="#f8f8f2"/><rect x="19.5" y="36.6" width="0.9" height="1.3" fill="#f92672"/><rect x="21.4" y="36.6" width="0.9" height="1.3" fill="#ae81ff"/><rect x="22.3" y="36.6" width="0.9" height="1.3" fill="#f8f8f2"/><rect x="24.2" y="36.6" width="8.4" height="1.3" fill="#f8f8f2"/><rect x="33.5" y="36.6" width="0.9" height="1.3" fill="#f92672"/><rect x="35.3" y="36.6" width="7.4" height="1.3" fill="#f8f8f2"/><rect x="7.4" y="38.6" width="4.7" height="1.3" fill="#66d9ef"/><rect x="12.1" y="38.6" width="0.9" height="1.3" fill="#f8f8f2"/><rect x="13.0" y="38.6" width="2.8" height="1.3" fill="#66d9ef"/><rect x="16.7" y="38.6" width="0.9" height="1.3" fill="#f92672"/><rect x="18.6" y="38.6" width="8.4" height="1.3" fill="#e6db74"/><rect x="27.0" y="38.6" width="0.9" height="1.3" fill="#f92672"/><rect x="28.8" y="38.6" width="7.4" height="1.3" fill="#f8f8f2"/><rect x="37.2" y="38.6" width="0.9" height="1.3" fill="#f92672"/><rect x="38.1" y="38.6" width="5.6" height="1.3" fill="#e6db74"/><rect x="3.7" y="40.6" width="0.9" height="1.3" fill="#f8f8f2"/><rect x="3.7" y="42.6" width="5.6" height="1.3" fill="#66d9ef"/><rect x="9.3" y="42.6" width="0.9" height="1.3" fill="#f8f8f2"/><rect x="10.2" y="42.6" width="10.2" height="1.3" fill="#66d9ef"/><rect x="20.5" y="42.6" width="0.9" height="1.3" fill="#f8f8f2"/><rect x="21.4" y="42.6" width="7.4" height="1.3" fill="#66d9ef"/><rect x="29.8" y="42.6" width="5.6" height="1.3" fill="#a6e22e"/><rect x="35.3" y="42.6" width="1.9" height="1.3" fill="#f8f8f2"/><rect x="39.1" y="42.6" width="0.9" height="1.3" fill="#f8f8f2"/><rect x="7.4" y="44.6" width="2.8" height="1.3" fill="#66d9ef"/><rect x="11.2" y="44.6" width="4.7" height="1.3" fill="#66d9ef"/><rect x="16.7" y="44.6" width="0.9" height="1.3" fill="#f92672"/><rect x="18.6" y="44.6" width="7.4" height="1.3" fill="#66d9ef"/><rect x="26.0" y="44.6" width="0.9" height="1.3" fill="#f8f8f2"/><rect x="27.0" y="44.6" width="13.0" height="1.3" fill="#66d9ef"/><rect x="40.0" y="44.6" width="0.9" height="1.3" fill="#f8f8f2"/><rect x="40.9" y="44.6" width="4.7" height="1.3" fill="#e6db74"/><rect x="45.6" y="44.6" width="1.9" height="1.3" fill="#f8f8f2"/><rect x="7.4" y="46.6" width="7.4" height="1.3" fill="#f8f8f2"/><rect x="15.8" y="46.6" width="0.9" height="1.3" fill="#f92672"/><rect x="17.7" y="46.6" width="7.4" height="1.3" fill="#f8f8f2"/><rect x="26.0" y="46.6" width="0.9" height="1.3" fill="#f92672"/><rect x="27.9" y="46.6" width="0.9" height="1.3" fill="#ae81ff"/><rect x="28.8" y="46.6" width="0.9" height="1.3" fill="#f8f8f2"/><rect x="7.4" y="48.6" width="1.9" height="1.3" fill="#f92672"/><rect x="10.2" y="48.6" width="8.4" height="1.3" fill="#f8f8f2"/><rect x="19.5" y="48.6" width="0.9" height="1.3" fill="#f92672"/><rect x="21.4" y="48.6" width="5.6" height="1.3" fill="#f8f8f2"/><rect x="27.9" y="48.6" width="8.4" height="1.3" fill="#f8f8f2"/><rect x="37.2" y="48.6" width="0.9" height="1.3" fill="#f92672"/><rect x="39.1" y="48.6" width="0.9" height="1.3" fill="#ae81ff"/><rect x="40.0" y="48.6" width="2.8" height="1.3" fill="#f8f8f2"/><rect x="7.4" y="50.6" width="1.9" height="1.3" fill="#f92672"/><rect x="10.2" y="50.6" width="8.4" height="1.3" fill="#f8f8f2"/><rect x="19.5" y="50.6" width="0.9" height="1.3" fill="#f92672"/><rect x="21.4" y="50.6" width="0.9" height="1.3" fill="#ae81ff"/><rect x="22.3" y="50.6" width="0.9" height="1.3" fill="#f8f8f2"/><rect x="24.2" y="50.6" width="8.4" height="1.3" fill="#f8f8f2"/><rect x="33.5" y="50.6" width="0.9" height="1.3" fill="#f92672"/><rect x="35.3" y="50.6" width="7.4" height="1.3" fill="#f8f8f2"/><rect x="7.4" y="52.6" width="4.7" height="1.3" fill="#66d9ef"/><rect x="12.1" y="52.6" width="0.9" height="1.3" fill="#f8f8f2"/><rect x="13.0" y="52.6" width="2.8" height="1.3" fill="#66d9ef"/><rect x="16.7" y="52.6" width="0.9" height="1.3" fill="#f92672"/><rect x="18.6" y="52.6" width="8.4" height="1.3" fill="#e6db74"/><rect x="27.0" y="52.6" width="0.9" height="1.3" fill="#f92672"/><rect x="28.8" y="52.6" width="7.4" height="1.3" fill="#f8f8f2"/><rect x="37.2" y="52.6" width="0.9" height="1.3" fill="#f92672"/><rect x="38.1" y="52.6" width="5.6" height="1.3" fill="#e6db74"/><rect x="3.7" y="54.6" width="1.9" height="1.3" fill="#f8f8f2"/><rect x="5.6" y="54.6" width="3.7" height="1.3" fill="#ae81ff"/><rect x="9.3" y="54.6" width="1.9" height="1.3" fill="#f8f8f2"/><rect x="3.7" y="60.6" width="1.9" height="1.3" fill="#f8f8f2"/><rect x="5.6" y="60.6" width="5.6" height="1.3" fill="#f92672"/><rect x="11.2" y="60.6" width="0.9" height="1.3" fill="#f8f8f2"/><rect x="0.0" y="66.6" width="1.9" height="1.3" fill="#f8f8f2"/><rect x="1.9" y="66.6" width="3.7" height="1.3" fill="#f92672"/><rect x="5.6" y="66.6" width="0.9" height="1.3" fill="#f8f8f2"/><rect x="0.0" y="70.6" width="0.9" height="1.3" fill="#f8f8f2"/><rect x="0.9" y="70.6" width="3.7" height="1.3" fill="#f92672"/><rect x="5.6" y="70.6" width="5.6" height="1.3" fill="#a6e22e"/><rect x="11.2" y="70.6" width="0.9" height="1.3" fill="#f8f8f2"/><rect x="12.1" y="70.6" width="9.3" height="1.3" fill="#e6db74"/><rect x="22.3" y="70.6" width="4.7" height="1.3" fill="#a6e22e"/><rect x="27.0" y="70.6" width="0.9" height="1.3" fill="#f8f8f2"/><rect x="27.9" y="70.6" width="5.6" height="1.3" fill="#e6db74"/><rect x="33.5" y="70.6" width="0.9" height="1.3" fill="#f8f8f2"/><rect x="3.7" y="74.6" width="0.9" height="1.3" fill="#f8f8f2"/><rect x="4.7" y="74.6" width="5.6" height="1.3" fill="#f92672"/><rect x="11.2" y="74.6" width="4.7" height="1.3" fill="#a6e22e"/><rect x="15.8" y="74.6" width="0.9" height="1.3" fill="#f8f8f2"/><rect x="16.7" y="74.6" width="11.2" height="1.3" fill="#e6db74"/><rect x="27.9" y="74.6" width="0.9" height="1.3" fill="#f8f8f2"/><rect x="7.4" y="76.6" width="0.9" height="1.3" fill="#f8f8f2"/><rect x="8.4" y="76.6" width="2.8" height="1.3" fill="#f92672"/><rect x="12.1" y="76.6" width="2.8" height="1.3" fill="#a6e22e"/><rect x="14.9" y="76.6" width="0.9" height="1.3" fill="#f8f8f2"/><rect x="15.8" y="76.6" width="17.7" height="1.3" fill="#e6db74"/><rect x="33.5" y="76.6" width="0.9" height="1.3" fill="#f8f8f2"/><rect x="7.4" y="78.6" width="0.9" height="1.3" fill="#f8f8f2"/><rect x="8.4" y="78.6" width="2.8" height="1.3" fill="#f92672"/><rect x="11.2" y="78.6" width="0.9" height="1.3" fill="#f8f8f2"/><rect x="12.1" y="78.6" width="0.9" height="1.3" fill="#f8f8f2"/><rect x="13.0" y="78.6" width="1.9" height="1.3" fill="#f92672"/><rect x="14.9" y="78.6" width="0.9" height="1.3" fill="#f8f8f2"/><rect x="11.2" y="80.6" width="0.9" height="1.3" fill="#f8f8f2"/><rect x="12.1" y="80.6" width="1.9" height="1.3" fill="#f92672"/><rect x="14.9" y="80.6" width="4.7" height="1.3" fill="#a6e22e"/><rect x="19.5" y="80.6" width="0.9" height="1.3" fill="#f8f8f2"/><rect x="20.5" y="80.6" width="7.4" height="1.3" fill="#e6db74"/><rect x="27.9" y="80.6" width="0.9" height="1.3" fill="#f8f8f2"/><rect x="28.8" y="80.6" width="0.9" height="1.3" fill="#f8f8f2"/><rect x="29.8" y="80.6" width="0.9" height="1.3" fill="#f92672"/><rect x="31.6" y="80.6" width="3.7" height="1.3" fill="#a6e22e"/><rect x="35.3" y="80.6" width="0.9" height="1.3" fill="#f8f8f2"/><rect x="36.3" y="80.6" width="11.2" height="1.3" fill="#e6db74"/><rect x="48.4" y="80.6" width="4.7" height="1.3" fill="#a6e22e"/><rect x="53.0" y="80.6" width="0.9" height="1.3" fill="#f8f8f2"/><rect x="53.9" y="80.6" width="5.6" height="1.3" fill="#e6db74"/><rect x="59.5" y="80.6" width="0.9" height="1.3" fill="#f8f8f2"/><rect x="60.5" y="80.6" width="3.7" height="1.3" fill="#f8f8f2"/><rect x="64.2" y="80.6" width="1.9" height="1.3" fill="#f8f8f2"/><rect x="66.0" y="80.6" width="0.9" height="1.3" fill="#f92672"/><rect x="67.0" y="80.6" width="0.9" height="1.3" fill="#f8f8f2"/><rect x="67.9" y="80.6" width="1.9" height="1.3" fill="#f8f8f2"/><rect x="69.8" y="80.6" width="1.9" height="1.3" fill="#f92672"/><rect x="71.6" y="80.6" width="0.9" height="1.3" fill="#f8f8f2"/><rect x="11.2" y="82.6" width="0.9" height="1.3" fill="#f8f8f2"/><rect x="12.1" y="82.6" width="1.9" height="1.3" fill="#f92672"/><rect x="13.9" y="82.6" width="0.9" height="1.3" fill="#f8f8f2"/><rect x="14.9" y="82.6" width="0.9" height="1.3" fill="#f8f8f2"/><rect x="15.8" y="82.6" width="0.9" height="1.3" fill="#f92672"/><rect x="17.7" y="82.6" width="3.7" height="1.3" fill="#a6e22e"/><rect x="21.4" y="82.6" width="0.9" height="1.3" fill="#f8f8f2"/><rect x="22.3" y="82.6" width="12.1" height="1.3" fill="#e6db74"/><rect x="35.3" y="82.6" width="4.7" height="1.3" fill="#a6e22e"/><rect x="40.0" y="82.6" width="0.9" height="1.3" fill="#f8f8f2"/><rect x="40.9" y="82.6" width="7.4" height="1.3" fill="#e6db74"/><rect x="48.4" y="82.6" width="0.9" height="1.3" fill="#f8f8f2"/><rect x="49.3" y="82.6" width="5.6" height="1.3" fill="#f8f8f2"/><rect x="54.9" y="82.6" width="1.9" height="1.3" fill="#f8f8f2"/><rect x="56.7" y="82.6" width="0.9" height="1.3" fill="#f92672"/><rect x="57.7" y="82.6" width="0.9" height="1.3" fill="#f8f8f2"/><rect x="58.6" y="82.6" width="1.9" height="1.3" fill="#f8f8f2"/><rect x="60.4" y="82.6" width="1.9" height="1.3" fill="#f92672"/><rect x="62.3" y="82.6" width="0.9" height="1.3" fill="#f8f8f2"/><rect x="11.2" y="86.6" width="0.9" height="1.3" fill="#f8f8f2"/><rect x="12.1" y="86.6" width="1.9" height="1.3" fill="#f92672"/><rect x="13.9" y="86.6" width="0.9" height="1.3" fill="#f8f8f2"/><rect x="14.9" y="86.6" width="0.9" height="1.3" fill="#f8f8f2"/><rect x="15.8" y="86.6" width="0.9" height="1.3" fill="#f92672"/><rect x="17.7" y="86.6" width="3.7" height="1.3" fill="#a6e22e"/><rect x="21.4" y="86.6" width="0.9" height="1.3" fill="#f8f8f2"/><rect x="22.3" y="86.6" width="11.2" height="1.3" fill="#e6db74"/><rect x="34.4" y="86.6" width="4.7" height="1.3" fill="#a6e22e"/><rect x="39.1" y="86.6" width="0.9" height="1.3" fill="#f8f8f2"/><rect x="40.0" y="86.6" width="6.5" height="1.3" fill="#e6db74"/><rect x="46.5" y="86.6" width="0.9" height="1.3" fill="#f8f8f2"/><rect x="47.4" y="86.6" width="4.7" height="1.3" fill="#f8f8f2"/><rect x="52.1" y="86.6" width="1.9" height="1.3" fill="#f8f8f2"/><rect x="53.9" y="86.6" width="0.9" height="1.3" fill="#f92672"/><rect x="54.9" y="86.6" width="0.9" height="1.3" fill="#f8f8f2"/><rect x="55.8" y="86.6" width="1.9" height="1.3" fill="#f8f8f2"/><rect x="57.7" y="86.6" width="1.9" height="1.3" fill="#f92672"/><rect x="59.5" y="86.6" width="0.9" height="1.3" fill="#f8f8f2"/><rect x="11.2" y="88.6" width="0.9" height="1.3" fill="#f8f8f2"/><rect x="12.1" y="88.6" width="1.9" height="1.3" fill="#f92672"/><rect x="13.9" y="88.6" width="0.9" height="1.3" fill="#f8f8f2"/><rect x="14.9" y="88.6" width="0.9" height="1.3" fill="#f8f8f2"/><rect x="15.8" y="88.6" width="0.9" height="1.3" fill="#f92672"/><rect x="17.7" y="88.6" width="3.7" height="1.3" fill="#a6e22e"/><rect x="21.4" y="88.6" width="0.9" height="1.3" fill="#f8f8f2"/><rect x="22.3" y="88.6" width="12.1" height="1.3" fill="#e6db74"/><rect x="35.3" y="88.6" width="4.7" height="1.3" fill="#a6e22e"/><rect x="40.0" y="88.6" width="0.9" height="1.3" fill="#f8f8f2"/><rect x="40.9" y="88.6" width="6.5" height="1.3" fill="#e6db74"/><rect x="48.4" y="88.6" width="1.9" height="1.3" fill="#e6db74"/><rect x="51.1" y="88.6" width="9.3" height="1.3" fill="#e6db74"/><rect x="61.4" y="88.6" width="7.4" height="1.3" fill="#e6db74"/><rect x="68.8" y="88.6" width="0.9" height="1.3" fill="#f8f8f2"/><rect x="69.8" y="88.6" width="9.3" height="1.3" fill="#f8f8f2"/><rect x="80.0" y="88.6" width="5.6" height="1.3" fill="#f8f8f2"/><rect x="85.6" y="88.6" width="1.9" height="1.3" fill="#f8f8f2"/><rect x="87.4" y="88.6" width="0.9" height="1.3" fill="#f92672"/><rect x="88.4" y="88.6" width="0.9" height="1.3" fill="#f8f8f2"/><rect x="89.3" y="88.6" width="1.9" height="1.3" fill="#f8f8f2"/><rect x="91.1" y="88.6" width="1.9" height="1.3" fill="#f92672"/><rect x="93.0" y="88.6" width="0.9" height="1.3" fill="#f8f8f2"/><rect x="7.4" y="90.6" width="1.9" height="1.3" fill="#f8f8f2"/><rect x="9.3" y="90.6" width="1.9" height="1.3" fill="#f92672"/><rect x="11.2" y="90.6" width="0.9" height="1.3" fill="#f8f8f2"/><rect x="12.1" y="90.6" width="1.9" height="1.3" fill="#f8f8f2"/><rect x="13.9" y="90.6" width="2.8" height="1.3" fill="#f92672"/><rect x="16.7" y="90.6" width="0.9" height="1.3" fill="#f8f8f2"/><rect x="3.7" y="92.6" width="1.9" height="1.3" fill="#f8f8f2"/><rect x="5.6" y="92.6" width="5.6" height="1.3" fill="#f92672"/><rect x="11.2" y="92.6" width="0.9" height="1.3" fill="#f8f8f2"/><rect x="3.7" y="96.6" width="0.9" height="1.3" fill="#f8f8f2"/><rect x="4.7" y="96.6" width="2.8" height="1.3" fill="#f92672"/><rect x="8.4" y="96.6" width="4.7" height="1.3" fill="#a6e22e"/><rect x="13.0" y="96.6" width="0.9" height="1.3" fill="#f8f8f2"/><rect x="14.0" y="96.6" width="12.1" height="1.3" fill="#e6db74"/><rect x="26.0" y="96.6" width="0.9" height="1.3" fill="#f8f8f2"/><rect x="7.4" y="98.6" width="0.9" height="1.3" fill="#f8f8f2"/><rect x="8.4" y="98.6" width="2.8" height="1.3" fill="#f92672"/><rect x="12.1" y="98.6" width="4.7" height="1.3" fill="#a6e22e"/><rect x="16.7" y="98.6" width="0.9" height="1.3" fill="#f8f8f2"/><rect x="17.7" y="98.6" width="8.4" height="1.3" fill="#e6db74"/><rect x="26.0" y="98.6" width="0.9" height="1.3" fill="#f8f8f2"/><rect x="14.9" y="100.6" width="0.9" height="1.3" fill="#f8f8f2"/><rect x="15.8" y="100.6" width="6.5" height="1.3" fill="#f92672"/><rect x="23.2" y="100.6" width="4.7" height="1.3" fill="#a6e22e"/><rect x="27.9" y="100.6" width="0.9" height="1.3" fill="#f8f8f2"/><rect x="28.8" y="100.6" width="11.2" height="1.3" fill="#e6db74"/><rect x="40.0" y="100.6" width="0.9" height="1.3" fill="#f8f8f2"/><rect x="18.6" y="104.6" width="0.9" height="1.3" fill="#f8f8f2"/><rect x="19.5" y="104.6" width="6.5" height="1.3" fill="#f92672"/><rect x="26.0" y="104.6" width="0.9" height="1.3" fill="#f8f8f2"/><rect x="22.3" y="106.6" width="0.9" height="1.3" fill="#f8f8f2"/><rect x="23.2" y="106.6" width="0.9" height="1.3" fill="#f92672"/><rect x="24.2" y="106.6" width="0.9" height="1.3" fill="#f8f8f2"/><rect x="22.3" y="108.6" width="0.9" height="1.3" fill="#f8f8f2"/><rect x="23.2" y="108.6" width="2.8" height="1.3" fill="#f92672"/><rect x="27.0" y="108.6" width="1.9" height="1.3" fill="#a6e22e"/><rect x="28.8" y="108.6" width="0.9" height="1.3" fill="#f8f8f2"/><rect x="29.8" y="108.6" width="10.2" height="1.3" fill="#e6db74"/><rect x="40.0" y="108.6" width="0.9" height="1.3" fill="#f8f8f2"/><rect x="22.3" y="110.6" width="0.9" height="1.3" fill="#f8f8f2"/><rect x="23.2" y="110.6" width="2.8" height="1.3" fill="#f92672"/><rect x="27.0" y="110.6" width="2.8" height="1.3" fill="#a6e22e"/><rect x="29.8" y="110.6" width="0.9" height="1.3" fill="#f8f8f2"/><rect x="30.7" y="110.6" width="12.1" height="1.3" fill="#e6db74"/><rect x="43.7" y="110.6" width="1.9" height="1.3" fill="#a6e22e"/><rect x="45.6" y="110.6" width="0.9" height="1.3" fill="#f8f8f2"/><rect x="46.5" y="110.6" width="4.7" height="1.3" fill="#e6db74"/><rect x="51.1" y="110.6" width="1.9" height="1.3" fill="#f8f8f2"/><rect x="22.3" y="112.6" width="0.9" height="1.3" fill="#f8f8f2"/><rect x="23.2" y="112.6" width="2.8" height="1.3" fill="#f92672"/><rect x="27.0" y="112.6" width="1.9" height="1.3" fill="#a6e22e"/><rect x="28.8" y="112.6" width="0.9" height="1.3" fill="#f8f8f2"/><rect x="29.8" y="112.6" width="12.1" height="1.3" fill="#e6db74"/><rect x="41.8" y="112.6" width="0.9" height="1.3" fill="#f8f8f2"/><rect x="42.8" y="112.6" width="0.9" height="1.3" fill="#f8f8f2"/><rect x="43.7" y="112.6" width="2.8" height="1.3" fill="#f92672"/><rect x="47.4" y="112.6" width="6.5" height="1.3" fill="#a6e22e"/><rect x="53.9" y="112.6" width="0.9" height="1.3" fill="#f8f8f2"/><rect x="54.9" y="112.6" width="10.2" height="1.3" fill="#e6db74"/><rect x="66.0" y="112.6" width="4.7" height="1.3" fill="#a6e22e"/><rect x="70.7" y="112.6" width="0.9" height="1.3" fill="#f8f8f2"/><rect x="71.6" y="112.6" width="5.6" height="1.3" fill="#e6db74"/><rect x="78.1" y="112.6" width="2.8" height="1.3" fill="#a6e22e"/><rect x="80.9" y="112.6" width="0.9" height="1.3" fill="#f8f8f2"/><rect x="81.8" y="112.6" width="18.6" height="1.3" fill="#e6db74"/><rect x="100.4" y="112.6" width="1.9" height="1.3" fill="#f8f8f2"/><rect x="102.3" y="112.6" width="1.9" height="1.3" fill="#f8f8f2"/><rect x="104.2" y="112.6" width="2.8" height="1.3" fill="#f92672"/><rect x="107.0" y="112.6" width="0.9" height="1.3" fill="#f8f8f2"/><rect x="22.3" y="114.6" width="0.9" height="1.3" fill="#f8f8f2"/><rect x="23.2" y="114.6" width="2.8" height="1.3" fill="#f92672"/><rect x="27.0" y="114.6" width="1.9" height="1.3" fill="#a6e22e"/><rect x="28.8" y="114.6" width="0.9" height="1.3" fill="#f8f8f2"/><rect x="29.8" y="114.6" width="13.0" height="1.3" fill="#e6db74"/><rect x="42.8" y="114.6" width="0.9" height="1.3" fill="#f8f8f2"/><rect x="43.7" y="114.6" width="0.9" height="1.3" fill="#f8f8f2"/><rect x="44.6" y="114.6" width="2.8" height="1.3" fill="#f92672"/><rect x="48.4" y="114.6" width="6.5" height="1.3" fill="#a6e22e"/><rect x="54.9" y="114.6" width="0.9" height="1.3" fill="#f8f8f2"/><rect x="55.8" y="114.6" width="9.3" height="1.3" fill="#e6db74"/><rect x="66.0" y="114.6" width="4.7" height="1.3" fill="#a6e22e"/><rect x="70.7" y="114.6" width="0.9" height="1.3" fill="#f8f8f2"/><rect x="71.6" y="114.6" width="6.5" height="1.3" fill="#e6db74"/><rect x="79.1" y="114.6" width="2.8" height="1.3" fill="#a6e22e"/><rect x="81.8" y="114.6" width="0.9" height="1.3" fill="#f8f8f2"/><rect x="82.8" y="114.6" width="19.5" height="1.3" fill="#e6db74"/><rect x="102.3" y="114.6" width="1.9" height="1.3" fill="#f8f8f2"/><rect x="104.2" y="114.6" width="1.9" height="1.3" fill="#f8f8f2"/><rect x="106.0" y="114.6" width="2.8" height="1.3" fill="#f92672"/><rect x="108.8" y="114.6" width="0.9" height="1.3" fill="#f8f8f2"/><rect x="22.3" y="116.6" width="1.9" height="1.3" fill="#f8f8f2"/><rect x="24.2" y="116.6" width="0.9" height="1.3" fill="#f92672"/><rect x="25.1" y="116.6" width="0.9" height="1.3" fill="#f8f8f2"/><rect x="18.6" y="118.6" width="1.9" height="1.3" fill="#f8f8f2"/><rect x="20.5" y="118.6" width="6.5" height="1.3" fill="#f92672"/><rect x="27.0" y="118.6" width="0.9" height="1.3" fill="#f8f8f2"/><rect x="14.9" y="122.6" width="1.9" height="1.3" fill="#f8f8f2"/><rect x="16.7" y="122.6" width="6.5" height="1.3" fill="#f92672"/><rect x="23.3" y="122.6" width="0.9" height="1.3" fill="#f8f8f2"/><rect x="14.9" y="126.6" width="0.9" height="1.3" fill="#f8f8f2"/><rect x="15.8" y="126.6" width="6.5" height="1.3" fill="#f92672"/><rect x="23.2" y="126.6" width="4.7" height="1.3" fill="#a6e22e"/><rect x="27.9" y="126.6" width="0.9" height="1.3" fill="#f8f8f2"/><rect x="28.8" y="126.6" width="14.0" height="1.3" fill="#e6db74"/><rect x="42.8" y="126.6" width="0.9" height="1.3" fill="#f8f8f2"/><rect x="18.6" y="130.6" width="0.9" height="1.3" fill="#f8f8f2"/><rect x="19.5" y="130.6" width="0.9" height="1.3" fill="#f92672"/><rect x="20.5" y="130.6" width="0.9" height="1.3" fill="#f8f8f2"/><rect x="21.4" y="130.6" width="0.9" height="1.3" fill="#f8f8f2"/><rect x="22.3" y="130.6" width="1.9" height="1.3" fill="#f92672"/><rect x="24.2" y="130.6" width="0.9" height="1.3" fill="#f8f8f2"/><rect x="25.1" y="130.6" width="0.9" height="1.3" fill="#f8f8f2"/><rect x="27.0" y="130.6" width="2.8" height="1.3" fill="#f8f8f2"/><rect x="29.8" y="130.6" width="1.9" height="1.3" fill="#f8f8f2"/><rect x="31.6" y="130.6" width="1.9" height="1.3" fill="#f92672"/><rect x="33.5" y="130.6" width="0.9" height="1.3" fill="#f8f8f2"/><rect x="18.6" y="132.6" width="1.9" height="1.3" fill="#f8f8f2"/><rect x="20.5" y="132.6" width="0.9" height="1.3" fill="#f92672"/><rect x="21.4" y="132.6" width="0.9" height="1.3" fill="#f8f8f2"/><rect x="18.6" y="136.6" width="0.9" height="1.3" fill="#f8f8f2"/><rect x="19.5" y="136.6" width="0.9" height="1.3" fill="#f92672"/><rect x="20.5" y="136.6" width="0.9" height="1.3" fill="#f8f8f2"/><rect x="18.6" y="138.6" width="0.9" height="1.3" fill="#f8f8f2"/><rect x="19.5" y="138.6" width="0.9" height="1.3" fill="#f92672"/><rect x="20.5" y="138.6" width="0.9" height="1.3" fill="#f8f8f2"/><rect x="21.4" y="138.6" width="10.2" height="1.3" fill="#f8f8f2"/><rect x="32.6" y="138.6" width="0.9" height="1.3" fill="#f8f8f2"/><rect x="34.4" y="138.6" width="10.2" height="1.3" fill="#f8f8f2"/><rect x="45.6" y="138.6" width="8.4" height="1.3" fill="#f8f8f2"/><rect x="54.9" y="138.6" width="5.6" height="1.3" fill="#f8f8f2"/><rect x="61.4" y="138.6" width="8.4" height="1.3" fill="#f8f8f2"/><rect x="70.7" y="138.6" width="3.7" height="1.3" fill="#f8f8f2"/><rect x="75.3" y="138.6" width="0.9" height="1.3" fill="#f8f8f2"/><rect x="77.2" y="138.6" width="3.7" height="1.3" fill="#f8f8f2"/><rect x="81.8" y="138.6" width="2.8" height="1.3" fill="#f8f8f2"/><rect x="85.6" y="138.6" width="3.7" height="1.3" fill="#f8f8f2"/><rect x="90.2" y="138.6" width="0.9" height="1.3" fill="#f8f8f2"/><rect x="92.1" y="138.6" width="7.4" height="1.3" fill="#f8f8f2"/><rect x="99.5" y="138.6" width="1.9" height="1.3" fill="#f8f8f2"/><rect x="101.4" y="138.6" width="0.9" height="1.3" fill="#f92672"/><rect x="102.3" y="138.6" width="0.9" height="1.3" fill="#f8f8f2"/><rect x="18.6" y="140.6" width="1.9" height="1.3" fill="#f8f8f2"/><rect x="20.5" y="140.6" width="0.9" height="1.3" fill="#f92672"/><rect x="21.4" y="140.6" width="0.9" height="1.3" fill="#f8f8f2"/><rect x="18.6" y="144.6" width="0.9" height="1.3" fill="#f8f8f2"/><rect x="19.5" y="144.6" width="0.9" height="1.3" fill="#f92672"/><rect x="20.5" y="144.6" width="0.9" height="1.3" fill="#f8f8f2"/><rect x="18.6" y="148.6" width="0.9" height="1.3" fill="#f8f8f2"/><rect x="19.5" y="148.6" width="1.9" height="1.3" fill="#f92672"/><rect x="21.4" y="148.6" width="0.9" height="1.3" fill="#f8f8f2"/><rect x="22.3" y="148.6" width="3.7" height="1.3" fill="#f8f8f2"/><rect x="27.0" y="148.6" width="5.6" height="1.3" fill="#f8f8f2"/><rect x="32.5" y="148.6" width="1.9" height="1.3" fill="#f8f8f2"/><rect x="34.4" y="148.6" width="1.9" height="1.3" fill="#f92672"/><rect x="36.3" y="148.6" width="0.9" height="1.3" fill="#f8f8f2"/><rect x="18.6" y="152.6" width="0.9" height="1.3" fill="#f8f8f2"/><rect x="19.5" y="152.6" width="1.9" height="1.3" fill="#f92672"/><rect x="22.3" y="152.6" width="4.7" height="1.3" fill="#a6e22e"/><rect x="27.0" y="152.6" width="0.9" height="1.3" fill="#f8f8f2"/><rect x="27.9" y="152.6" width="5.6" height="1.3" fill="#e6db74"/><rect x="33.5" y="152.6" width="0.9" height="1.3" fill="#f8f8f2"/><rect x="34.4" y="152.6" width="8.4" height="1.3" fill="#f8f8f2"/><rect x="43.7" y="152.6" width="0.9" height="1.3" fill="#f8f8f2"/><rect x="45.6" y="152.6" width="3.7" height="1.3" fill="#f8f8f2"/><rect x="50.2" y="152.6" width="10.2" height="1.3" fill="#f8f8f2"/><rect x="61.4" y="152.6" width="5.6" height="1.3" fill="#f8f8f2"/><rect x="67.0" y="152.6" width="1.9" height="1.3" fill="#f8f8f2"/><rect x="68.8" y="152.6" width="1.9" height="1.3" fill="#f92672"/><rect x="70.7" y="152.6" width="0.9" height="1.3" fill="#f8f8f2"/><rect x="18.6" y="154.6" width="0.9" height="1.3" fill="#f8f8f2"/><rect x="19.5" y="154.6" width="1.9" height="1.3" fill="#f92672"/><rect x="22.3" y="154.6" width="4.7" height="1.3" fill="#a6e22e"/><rect x="27.0" y="154.6" width="0.9" height="1.3" fill="#f8f8f2"/><rect x="27.9" y="154.6" width="5.6" height="1.3" fill="#e6db74"/><rect x="33.5" y="154.6" width="0.9" height="1.3" fill="#f8f8f2"/><rect x="34.4" y="154.6" width="8.4" height="1.3" fill="#f8f8f2"/><rect x="43.7" y="154.6" width="0.9" height="1.3" fill="#f8f8f2"/><rect x="45.6" y="154.6" width="3.7" height="1.3" fill="#f8f8f2"/><rect x="50.2" y="154.6" width="0.9" height="1.3" fill="#f8f8f2"/><rect x="52.1" y="154.6" width="4.7" height="1.3" fill="#f8f8f2"/><rect x="57.7" y="154.6" width="8.4" height="1.3" fill="#f8f8f2"/><rect x="67.0" y="154.6" width="5.6" height="1.3" fill="#f8f8f2"/><rect x="73.5" y="154.6" width="4.7" height="1.3" fill="#f8f8f2"/><rect x="79.1" y="154.6" width="1.9" height="1.3" fill="#f8f8f2"/><rect x="81.8" y="154.6" width="8.4" height="1.3" fill="#f8f8f2"/><rect x="91.1" y="154.6" width="0.9" height="1.3" fill="#f8f8f2"/><rect x="93.0" y="154.6" width="4.7" height="1.3" fill="#f8f8f2"/><rect x="98.6" y="154.6" width="5.6" height="1.3" fill="#f8f8f2"/><rect x="104.2" y="154.6" width="1.9" height="1.3" fill="#f8f8f2"/><rect x="106.0" y="154.6" width="1.9" height="1.3" fill="#f92672"/><rect x="107.9" y="154.6" width="0.9" height="1.3" fill="#f8f8f2"/><rect x="18.6" y="156.6" width="0.9" height="1.3" fill="#f8f8f2"/><rect x="19.5" y="156.6" width="1.9" height="1.3" fill="#f92672"/><rect x="22.3" y="156.6" width="4.7" height="1.3" fill="#a6e22e"/><rect x="27.0" y="156.6" width="0.9" height="1.3" fill="#f8f8f2"/><rect x="27.9" y="156.6" width="5.6" height="1.3" fill="#e6db74"/><rect x="33.5" y="156.6" width="0.9" height="1.3" fill="#f8f8f2"/><rect x="34.4" y="156.6" width="8.4" height="1.3" fill="#f8f8f2"/><rect x="43.7" y="156.6" width="0.9" height="1.3" fill="#f8f8f2"/><rect x="45.6" y="156.6" width="12.1" height="1.3" fill="#f8f8f2"/><rect x="58.6" y="156.6" width="2.8" height="1.3" fill="#f8f8f2"/><rect x="62.3" y="156.6" width="8.4" height="1.3" fill="#f8f8f2"/><rect x="71.6" y="156.6" width="0.9" height="1.3" fill="#f8f8f2"/><rect x="73.5" y="156.6" width="2.8" height="1.3" fill="#f8f8f2"/><rect x="77.2" y="156.6" width="5.6" height="1.3" fill="#f8f8f2"/><rect x="83.7" y="156.6" width="7.4" height="1.3" fill="#f8f8f2"/><rect x="92.1" y="156.6" width="9.3" height="1.3" fill="#f8f8f2"/><rect x="102.3" y="156.6" width="6.5" height="1.3" fill="#f8f8f2"/><rect x="109.7" y="156.6" width="6.5" height="1.3" fill="#f8f8f2"/><rect x="117.2" y="156.6" width="8.4" height="1.3" fill="#f8f8f2"/><rect x="126.5" y="156.6" width="5.6" height="1.3" fill="#f8f8f2"/><rect x="133.0" y="156.6" width="8.4" height="1.3" fill="#f8f8f2"/><rect x="142.3" y="156.6" width="4.7" height="1.3" fill="#f8f8f2"/><rect x="146.9" y="156.6" width="1.9" height="1.3" fill="#f8f8f2"/><rect x="148.8" y="156.6" width="1.9" height="1.3" fill="#f92672"/><rect x="150.7" y="156.6" width="0.3" height="1.3" fill="#f8f8f2"/><rect x="18.6" y="160.6" width="0.9" height="1.3" fill="#f8f8f2"/><rect x="19.5" y="160.6" width="0.9" height="1.3" fill="#f92672"/><rect x="20.5" y="160.6" width="0.9" height="1.3" fill="#f8f8f2"/><rect x="21.4" y="160.6" width="8.4" height="1.3" fill="#f8f8f2"/><rect x="30.7" y="160.6" width="5.6" height="1.3" fill="#f8f8f2"/><rect x="37.2" y="160.6" width="0.9" height="1.3" fill="#f8f8f2"/><rect x="39.1" y="160.6" width="6.5" height="1.3" fill="#f8f8f2"/><rect x="46.5" y="160.6" width="1.9" height="1.3" fill="#f8f8f2"/><rect x="49.3" y="160.6" width="9.3" height="1.3" fill="#f8f8f2"/><rect x="58.6" y="160.6" width="1.9" height="1.3" fill="#f8f8f2"/><rect x="60.5" y="160.6" width="0.9" height="1.3" fill="#f92672"/><rect x="61.4" y="160.6" width="0.9" height="1.3" fill="#f8f8f2"/><rect x="22.3" y="164.6" width="0.9" height="1.3" fill="#f8f8f2"/><rect x="23.2" y="164.6" width="1.9" height="1.3" fill="#f92672"/><rect x="26.0" y="164.6" width="4.7" height="1.3" fill="#a6e22e"/><rect x="30.7" y="164.6" width="0.9" height="1.3" fill="#f8f8f2"/><rect x="31.6" y="164.6" width="5.6" height="1.3" fill="#e6db74"/><rect x="37.2" y="164.6" width="0.9" height="1.3" fill="#f8f8f2"/><rect x="38.1" y="164.6" width="6.5" height="1.3" fill="#f8f8f2"/><rect x="45.6" y="164.6" width="3.7" height="1.3" fill="#f8f8f2"/><rect x="50.2" y="164.6" width="7.4" height="1.3" fill="#f8f8f2"/><rect x="58.6" y="164.6" width="1.9" height="1.3" fill="#f8f8f2"/><rect x="61.4" y="164.6" width="2.8" height="1.3" fill="#f8f8f2"/><rect x="65.1" y="164.6" width="2.8" height="1.3" fill="#f8f8f2"/><rect x="68.8" y="164.6" width="6.5" height="1.3" fill="#f8f8f2"/><rect x="76.3" y="164.6" width="1.9" height="1.3" fill="#f8f8f2"/><rect x="79.1" y="164.6" width="4.7" height="1.3" fill="#f8f8f2"/><rect x="84.6" y="164.6" width="1.9" height="1.3" fill="#f8f8f2"/><rect x="87.4" y="164.6" width="2.8" height="1.3" fill="#f8f8f2"/><rect x="91.1" y="164.6" width="7.4" height="1.3" fill="#f8f8f2"/><rect x="99.5" y="164.6" width="7.4" height="1.3" fill="#f8f8f2"/><rect x="107.9" y="164.6" width="2.8" height="1.3" fill="#f8f8f2"/><rect x="111.6" y="164.6" width="4.7" height="1.3" fill="#f8f8f2"/><rect x="117.2" y="164.6" width="2.8" height="1.3" fill="#f8f8f2"/><rect x="120.9" y="164.6" width="7.4" height="1.3" fill="#f8f8f2"/><rect x="129.3" y="164.6" width="1.9" height="1.3" fill="#f8f8f2"/><rect x="132.1" y="164.6" width="3.7" height="1.3" fill="#f8f8f2"/><rect x="135.8" y="164.6" width="1.9" height="1.3" fill="#f8f8f2"/><rect x="137.6" y="164.6" width="1.9" height="1.3" fill="#f92672"/><rect x="139.5" y="164.6" width="0.9" height="1.3" fill="#f8f8f2"/><rect x="22.3" y="166.6" width="0.9" height="1.3" fill="#f8f8f2"/><rect x="23.2" y="166.6" width="1.9" height="1.3" fill="#f92672"/><rect x="26.0" y="166.6" width="4.7" height="1.3" fill="#a6e22e"/><rect x="30.7" y="166.6" width="0.9" height="1.3" fill="#f8f8f2"/><rect x="31.6" y="166.6" width="5.6" height="1.3" fill="#e6db74"/><rect x="37.2" y="166.6" width="0.9" height="1.3" fill="#f8f8f2"/><rect x="38.1" y="166.6" width="4.7" height="1.3" fill="#f8f8f2"/><rect x="43.7" y="166.6" width="1.9" height="1.3" fill="#f8f8f2"/><rect x="46.5" y="166.6" width="7.4" height="1.3" fill="#f8f8f2"/><rect x="54.9" y="166.6" width="1.9" height="1.3" fill="#f8f8f2"/><rect x="57.7" y="166.6" width="4.7" height="1.3" fill="#f8f8f2"/><rect x="63.2" y="166.6" width="1.9" height="1.3" fill="#f8f8f2"/><rect x="66.0" y="166.6" width="3.7" height="1.3" fill="#f8f8f2"/><rect x="70.7" y="166.6" width="5.6" height="1.3" fill="#f8f8f2"/><rect x="77.2" y="166.6" width="7.4" height="1.3" fill="#f8f8f2"/><rect x="85.6" y="166.6" width="3.7" height="1.3" fill="#f8f8f2"/><rect x="90.2" y="166.6" width="2.8" height="1.3" fill="#f8f8f2"/><rect x="93.9" y="166.6" width="5.6" height="1.3" fill="#f8f8f2"/><rect x="100.4" y="166.6" width="3.7" height="1.3" fill="#f8f8f2"/><rect x="105.1" y="166.6" width="2.8" height="1.3" fill="#f8f8f2"/><rect x="108.8" y="166.6" width="5.6" height="1.3" fill="#f8f8f2"/><rect x="114.4" y="166.6" width="1.9" height="1.3" fill="#f8f8f2"/><rect x="116.3" y="166.6" width="1.9" height="1.3" fill="#f92672"/><rect x="118.1" y="166.6" width="0.9" height="1.3" fill="#f8f8f2"/><rect x="22.3" y="168.6" width="0.9" height="1.3" fill="#f8f8f2"/><rect x="23.2" y="168.6" width="1.9" height="1.3" fill="#f92672"/><rect x="26.0" y="168.6" width="4.7" height="1.3" fill="#a6e22e"/><rect x="30.7" y="168.6" width="0.9" height="1.3" fill="#f8f8f2"/><rect x="31.6" y="168.6" width="5.6" height="1.3" fill="#e6db74"/><rect x="37.2" y="168.6" width="0.9" height="1.3" fill="#f8f8f2"/><rect x="38.1" y="168.6" width="6.5" height="1.3" fill="#f8f8f2"/><rect x="45.6" y="168.6" width="2.8" height="1.3" fill="#f8f8f2"/><rect x="49.3" y="168.6" width="2.8" height="1.3" fill="#f8f8f2"/><rect x="53.0" y="168.6" width="1.9" height="1.3" fill="#f8f8f2"/><rect x="55.8" y="168.6" width="4.7" height="1.3" fill="#f8f8f2"/><rect x="61.4" y="168.6" width="8.4" height="1.3" fill="#f8f8f2"/><rect x="70.7" y="168.6" width="7.4" height="1.3" fill="#f8f8f2"/><rect x="79.0" y="168.6" width="5.6" height="1.3" fill="#f8f8f2"/><rect x="84.6" y="168.6" width="1.9" height="1.3" fill="#f8f8f2"/><rect x="86.5" y="168.6" width="1.9" height="1.3" fill="#f92672"/><rect x="88.3" y="168.6" width="0.9" height="1.3" fill="#f8f8f2"/><rect x="22.3" y="170.6" width="0.9" height="1.3" fill="#f8f8f2"/><rect x="23.2" y="170.6" width="1.9" height="1.3" fill="#f92672"/><rect x="26.0" y="170.6" width="4.7" height="1.3" fill="#a6e22e"/><rect x="30.7" y="170.6" width="0.9" height="1.3" fill="#f8f8f2"/><rect x="31.6" y="170.6" width="5.6" height="1.3" fill="#e6db74"/><rect x="37.2" y="170.6" width="0.9" height="1.3" fill="#f8f8f2"/><rect x="38.1" y="170.6" width="8.4" height="1.3" fill="#f8f8f2"/><rect x="47.4" y="170.6" width="8.4" height="1.3" fill="#f8f8f2"/><rect x="56.7" y="170.6" width="6.5" height="1.3" fill="#f8f8f2"/><rect x="64.2" y="170.6" width="5.6" height="1.3" fill="#f8f8f2"/><rect x="70.7" y="170.6" width="0.9" height="1.3" fill="#f8f8f2"/><rect x="71.6" y="170.6" width="1.9" height="1.3" fill="#f8f8f2"/><rect x="73.5" y="170.6" width="1.9" height="1.3" fill="#f92672"/><rect x="75.3" y="170.6" width="0.9" height="1.3" fill="#f8f8f2"/><rect x="22.3" y="172.6" width="0.9" height="1.3" fill="#f8f8f2"/><rect x="23.2" y="172.6" width="1.9" height="1.3" fill="#f92672"/><rect x="26.0" y="172.6" width="4.7" height="1.3" fill="#a6e22e"/><rect x="30.7" y="172.6" width="0.9" height="1.3" fill="#f8f8f2"/><rect x="31.6" y="172.6" width="5.6" height="1.3" fill="#e6db74"/><rect x="37.2" y="172.6" width="0.9" height="1.3" fill="#f8f8f2"/><rect x="38.1" y="172.6" width="3.7" height="1.3" fill="#f8f8f2"/><rect x="42.8" y="172.6" width="4.7" height="1.3" fill="#f8f8f2"/><rect x="48.4" y="172.6" width="2.8" height="1.3" fill="#f8f8f2"/><rect x="52.1" y="172.6" width="5.6" height="1.3" fill="#f8f8f2"/><rect x="58.6" y="172.6" width="8.4" height="1.3" fill="#f8f8f2"/><rect x="67.9" y="172.6" width="6.5" height="1.3" fill="#f8f8f2"/><rect x="75.3" y="172.6" width="7.4" height="1.3" fill="#f8f8f2"/><rect x="82.8" y="172.6" width="1.9" height="1.3" fill="#f8f8f2"/><rect x="84.6" y="172.6" width="1.9" height="1.3" fill="#f92672"/><rect x="86.5" y="172.6" width="0.9" height="1.3" fill="#f8f8f2"/><rect x="22.3" y="174.6" width="0.9" height="1.3" fill="#f8f8f2"/><rect x="23.2" y="174.6" width="1.9" height="1.3" fill="#f92672"/><rect x="26.0" y="174.6" width="4.7" height="1.3" fill="#a6e22e"/><rect x="30.7" y="174.6" width="0.9" height="1.3" fill="#f8f8f2"/><rect x="31.6" y="174.6" width="5.6" height="1.3" fill="#e6db74"/><rect x="37.2" y="174.6" width="0.9" height="1.3" fill="#f8f8f2"/><rect x="38.1" y="174.6" width="5.6" height="1.3" fill="#f8f8f2"/><rect x="44.6" y="174.6" width="2.8" height="1.3" fill="#f8f8f2"/><rect x="48.4" y="174.6" width="2.8" height="1.3" fill="#f8f8f2"/><rect x="52.1" y="174.6" width="7.4" height="1.3" fill="#f8f8f2"/><rect x="60.4" y="174.6" width="3.7" height="1.3" fill="#f8f8f2"/><rect x="65.1" y="174.6" width="6.5" height="1.3" fill="#f8f8f2"/><rect x="72.5" y="174.6" width="3.7" height="1.3" fill="#f8f8f2"/><rect x="77.2" y="174.6" width="8.4" height="1.3" fill="#f8f8f2"/><rect x="86.5" y="174.6" width="7.4" height="1.3" fill="#f8f8f2"/><rect x="94.9" y="174.6" width="1.9" height="1.3" fill="#f8f8f2"/><rect x="97.7" y="174.6" width="2.8" height="1.3" fill="#f8f8f2"/><rect x="101.4" y="174.6" width="7.4" height="1.3" fill="#f8f8f2"/><rect x="108.8" y="174.6" width="1.9" height="1.3" fill="#f8f8f2"/><rect x="110.7" y="174.6" width="1.9" height="1.3" fill="#f92672"/><rect x="112.5" y="174.6" width="0.9" height="1.3" fill="#f8f8f2"/><rect x="22.3" y="176.6" width="0.9" height="1.3" fill="#f8f8f2"/><rect x="23.2" y="176.6" width="1.9" height="1.3" fill="#f92672"/><rect x="26.0" y="176.6" width="4.7" height="1.3" fill="#a6e22e"/><rect x="30.7" y="176.6" width="0.9" height="1.3" fill="#f8f8f2"/><rect x="31.6" y="176.6" width="5.6" height="1.3" fill="#e6db74"/><rect x="37.2" y="176.6" width="0.9" height="1.3" fill="#f8f8f2"/><rect x="38.1" y="176.6" width="6.5" height="1.3" fill="#f8f8f2"/><rect x="45.6" y="176.6" width="6.5" height="1.3" fill="#f8f8f2"/><rect x="53.0" y="176.6" width="8.4" height="1.3" fill="#f8f8f2"/><rect x="62.3" y="176.6" width="8.4" height="1.3" fill="#f8f8f2"/><rect x="71.6" y="176.6" width="2.8" height="1.3" fill="#f8f8f2"/><rect x="75.3" y="176.6" width="2.8" height="1.3" fill="#f8f8f2"/><rect x="79.1" y="176.6" width="5.6" height="1.3" fill="#f8f8f2"/><rect x="85.6" y="176.6" width="8.4" height="1.3" fill="#f8f8f2"/><rect x="94.9" y="176.6" width="2.8" height="1.3" fill="#f8f8f2"/><rect x="98.6" y="176.6" width="1.9" height="1.3" fill="#f8f8f2"/><rect x="101.4" y="176.6" width="2.8" height="1.3" fill="#f8f8f2"/><rect x="104.2" y="176.6" width="1.9" height="1.3" fill="#f8f8f2"/><rect x="106.0" y="176.6" width="1.9" height="1.3" fill="#f92672"/><rect x="107.9" y="176.6" width="0.9" height="1.3" fill="#f8f8f2"/><rect x="22.3" y="178.6" width="0.9" height="1.3" fill="#f8f8f2"/><rect x="23.2" y="178.6" width="1.9" height="1.3" fill="#f92672"/><rect x="26.0" y="178.6" width="4.7" height="1.3" fill="#a6e22e"/><rect x="30.7" y="178.6" width="0.9" height="1.3" fill="#f8f8f2"/><rect x="31.6" y="178.6" width="5.6" height="1.3" fill="#e6db74"/><rect x="37.2" y="178.6" width="0.9" height="1.3" fill="#f8f8f2"/><rect x="38.1" y="178.6" width="8.4" height="1.3" fill="#f8f8f2"/><rect x="47.4" y="178.6" width="5.6" height="1.3" fill="#f8f8f2"/><rect x="53.9" y="178.6" width="7.4" height="1.3" fill="#f8f8f2"/><rect x="62.3" y="178.6" width="6.5" height="1.3" fill="#f8f8f2"/><rect x="69.8" y="178.6" width="1.9" height="1.3" fill="#f8f8f2"/><rect x="72.5" y="178.6" width="6.5" height="1.3" fill="#f8f8f2"/><rect x="79.1" y="178.6" width="1.9" height="1.3" fill="#f8f8f2"/><rect x="80.9" y="178.6" width="1.9" height="1.3" fill="#f92672"/><rect x="82.8" y="178.6" width="0.9" height="1.3" fill="#f8f8f2"/><rect x="22.3" y="180.6" width="0.9" height="1.3" fill="#f8f8f2"/><rect x="23.2" y="180.6" width="1.9" height="1.3" fill="#f92672"/><rect x="26.0" y="180.6" width="4.7" height="1.3" fill="#a6e22e"/><rect x="30.7" y="180.6" width="0.9" height="1.3" fill="#f8f8f2"/><rect x="31.6" y="180.6" width="5.6" height="1.3" fill="#e6db74"/><rect x="37.2" y="180.6" width="0.9" height="1.3" fill="#f8f8f2"/><rect x="38.1" y="180.6" width="6.5" height="1.3" fill="#f8f8f2"/><rect x="45.6" y="180.6" width="3.7" height="1.3" fill="#f8f8f2"/><rect x="50.2" y="180.6" width="2.8" height="1.3" fill="#f8f8f2"/><rect x="53.9" y="180.6" width="8.4" height="1.3" fill="#f8f8f2"/><rect x="63.2" y="180.6" width="1.9" height="1.3" fill="#f8f8f2"/><rect x="66.0" y="180.6" width="4.7" height="1.3" fill="#f8f8f2"/><rect x="71.6" y="180.6" width="5.6" height="1.3" fill="#f8f8f2"/><rect x="78.1" y="180.6" width="3.7" height="1.3" fill="#f8f8f2"/><rect x="82.8" y="180.6" width="3.7" height="1.3" fill="#f8f8f2"/><rect x="86.5" y="180.6" width="1.9" height="1.3" fill="#f8f8f2"/><rect x="88.4" y="180.6" width="1.9" height="1.3" fill="#f92672"/><rect x="90.2" y="180.6" width="0.9" height="1.3" fill="#f8f8f2"/><rect x="22.3" y="182.6" width="0.9" height="1.3" fill="#f8f8f2"/><rect x="23.2" y="182.6" width="1.9" height="1.3" fill="#f92672"/><rect x="26.0" y="182.6" width="4.7" height="1.3" fill="#a6e22e"/><rect x="30.7" y="182.6" width="0.9" height="1.3" fill="#f8f8f2"/><rect x="31.6" y="182.6" width="5.6" height="1.3" fill="#e6db74"/><rect x="37.2" y="182.6" width="0.9" height="1.3" fill="#f8f8f2"/><rect x="38.1" y="182.6" width="7.4" height="1.3" fill="#f8f8f2"/><rect x="46.5" y="182.6" width="7.4" height="1.3" fill="#f8f8f2"/><rect x="54.9" y="182.6" width="8.4" height="1.3" fill="#f8f8f2"/><rect x="64.2" y="182.6" width="2.8" height="1.3" fill="#f8f8f2"/><rect x="67.9" y="182.6" width="3.7" height="1.3" fill="#f8f8f2"/><rect x="72.5" y="182.6" width="8.4" height="1.3" fill="#f8f8f2"/><rect x="81.8" y="182.6" width="7.4" height="1.3" fill="#f8f8f2"/><rect x="90.2" y="182.6" width="5.6" height="1.3" fill="#f8f8f2"/><rect x="96.7" y="182.6" width="4.7" height="1.3" fill="#f8f8f2"/><rect x="101.4" y="182.6" width="1.9" height="1.3" fill="#f8f8f2"/><rect x="103.2" y="182.6" width="1.9" height="1.3" fill="#f92672"/><rect x="105.1" y="182.6" width="0.9" height="1.3" fill="#f8f8f2"/><rect x="22.3" y="184.6" width="0.9" height="1.3" fill="#f8f8f2"/><rect x="23.2" y="184.6" width="1.9" height="1.3" fill="#f92672"/><rect x="26.0" y="184.6" width="4.7" height="1.3" fill="#a6e22e"/><rect x="30.7" y="184.6" width="0.9" height="1.3" fill="#f8f8f2"/><rect x="31.6" y="184.6" width="5.6" height="1.3" fill="#e6db74"/><rect x="37.2" y="184.6" width="0.9" height="1.3" fill="#f8f8f2"/><rect x="38.1" y="184.6" width="7.4" height="1.3" fill="#f8f8f2"/><rect x="46.5" y="184.6" width="5.6" height="1.3" fill="#f8f8f2"/><rect x="53.0" y="184.6" width="7.4" height="1.3" fill="#f8f8f2"/><rect x="61.4" y="184.6" width="6.5" height="1.3" fill="#f8f8f2"/><rect x="68.8" y="184.6" width="7.4" height="1.3" fill="#f8f8f2"/><rect x="77.2" y="184.6" width="3.7" height="1.3" fill="#f8f8f2"/><rect x="80.9" y="184.6" width="1.9" height="1.3" fill="#f8f8f2"/><rect x="82.8" y="184.6" width="1.9" height="1.3" fill="#f92672"/><rect x="84.6" y="184.6" width="0.9" height="1.3" fill="#f8f8f2"/><rect x="22.3" y="186.6" width="1.9" height="1.3" fill="#f8f8f2"/><rect x="24.2" y="186.6" width="1.9" height="1.3" fill="#f92672"/><rect x="26.0" y="186.6" width="0.9" height="1.3" fill="#f8f8f2"/><rect x="18.6" y="188.6" width="1.9" height="1.3" fill="#f8f8f2"/><rect x="20.5" y="188.6" width="6.5" height="1.3" fill="#f92672"/><rect x="27.0" y="188.6" width="0.9" height="1.3" fill="#f8f8f2"/><rect x="14.9" y="192.6" width="1.9" height="1.3" fill="#f8f8f2"/><rect x="16.7" y="192.6" width="2.8" height="1.3" fill="#f92672"/><rect x="19.5" y="192.6" width="0.9" height="1.3" fill="#f8f8f2"/><rect x="7.4" y="200.6" width="1.9" height="1.3" fill="#f8f8f2"/><rect x="9.3" y="200.6" width="2.8" height="1.3" fill="#f92672"/><rect x="12.1" y="200.6" width="0.9" height="1.3" fill="#f8f8f2"/><rect x="14.9" y="204.6" width="0.9" height="1.3" fill="#f8f8f2"/><rect x="15.8" y="204.6" width="4.7" height="1.3" fill="#f92672"/><rect x="21.4" y="204.6" width="4.7" height="1.3" fill="#a6e22e"/><rect x="26.0" y="204.6" width="0.9" height="1.3" fill="#f8f8f2"/><rect x="27.0" y="204.6" width="12.1" height="1.3" fill="#e6db74"/><rect x="39.1" y="204.6" width="0.9" height="1.3" fill="#f8f8f2"/><rect x="18.6" y="206.6" width="0.9" height="1.3" fill="#f8f8f2"/><rect x="19.5" y="206.6" width="6.5" height="1.3" fill="#f92672"/><rect x="26.0" y="206.6" width="0.9" height="1.3" fill="#f8f8f2"/><rect x="22.3" y="208.6" width="0.9" height="1.3" fill="#f8f8f2"/><rect x="23.2" y="208.6" width="1.9" height="1.3" fill="#f92672"/><rect x="25.1" y="208.6" width="0.9" height="1.3" fill="#f8f8f2"/><rect x="26.0" y="208.6" width="6.5" height="1.3" fill="#f8f8f2"/><rect x="32.5" y="208.6" width="1.9" height="1.3" fill="#f8f8f2"/><rect x="34.4" y="208.6" width="1.9" height="1.3" fill="#f92672"/><rect x="36.3" y="208.6" width="0.9" height="1.3" fill="#f8f8f2"/><rect x="22.3" y="212.6" width="0.9" height="1.3" fill="#f8f8f2"/><rect x="23.2" y="212.6" width="0.9" height="1.3" fill="#f92672"/><rect x="24.2" y="212.6" width="0.9" height="1.3" fill="#f8f8f2"/><rect x="25.1" y="212.6" width="4.7" height="1.3" fill="#f8f8f2"/><rect x="30.7" y="212.6" width="3.7" height="1.3" fill="#f8f8f2"/><rect x="35.3" y="212.6" width="5.6" height="1.3" fill="#f8f8f2"/><rect x="41.8" y="212.6" width="8.4" height="1.3" fill="#f8f8f2"/><rect x="51.1" y="212.6" width="0.9" height="1.3" fill="#f8f8f2"/><rect x="53.0" y="212.6" width="8.4" height="1.3" fill="#f8f8f2"/><rect x="61.4" y="212.6" width="1.9" height="1.3" fill="#f8f8f2"/><rect x="63.2" y="212.6" width="0.9" height="1.3" fill="#f92672"/><rect x="64.2" y="212.6" width="0.9" height="1.3" fill="#f8f8f2"/><rect x="22.3" y="214.6" width="0.9" height="1.3" fill="#f8f8f2"/><rect x="23.2" y="214.6" width="0.9" height="1.3" fill="#f92672"/><rect x="24.2" y="214.6" width="0.9" height="1.3" fill="#f8f8f2"/><rect x="25.1" y="214.6" width="5.6" height="1.3" fill="#f8f8f2"/><rect x="31.6" y="214.6" width="7.4" height="1.3" fill="#f8f8f2"/><rect x="40.0" y="214.6" width="0.9" height="1.3" fill="#f8f8f2"/><rect x="41.8" y="214.6" width="6.5" height="1.3" fill="#f8f8f2"/><rect x="49.3" y="214.6" width="2.8" height="1.3" fill="#f8f8f2"/><rect x="53.0" y="214.6" width="8.4" height="1.3" fill="#f8f8f2"/><rect x="62.3" y="214.6" width="8.4" height="1.3" fill="#f8f8f2"/><rect x="71.6" y="214.6" width="6.5" height="1.3" fill="#f8f8f2"/><rect x="79.1" y="214.6" width="6.5" height="1.3" fill="#f8f8f2"/><rect x="86.5" y="214.6" width="0.9" height="1.3" fill="#f8f8f2"/><rect x="88.4" y="214.6" width="10.2" height="1.3" fill="#f8f8f2"/><rect x="99.5" y="214.6" width="7.4" height="1.3" fill="#f8f8f2"/><rect x="107.0" y="214.6" width="1.9" height="1.3" fill="#f8f8f2"/><rect x="108.8" y="214.6" width="0.9" height="1.3" fill="#f92672"/><rect x="109.7" y="214.6" width="0.9" height="1.3" fill="#f8f8f2"/><rect x="22.3" y="218.6" width="0.9" height="1.3" fill="#f8f8f2"/><rect x="23.2" y="218.6" width="0.9" height="1.3" fill="#f92672"/><rect x="24.2" y="218.6" width="0.9" height="1.3" fill="#f8f8f2"/><rect x="25.1" y="218.6" width="6.5" height="1.3" fill="#f8f8f2"/><rect x="31.6" y="218.6" width="1.9" height="1.3" fill="#f8f8f2"/><rect x="33.5" y="218.6" width="0.9" height="1.3" fill="#f92672"/><rect x="34.4" y="218.6" width="0.9" height="1.3" fill="#f8f8f2"/><rect x="22.3" y="220.6" width="0.9" height="1.3" fill="#f8f8f2"/><rect x="23.2" y="220.6" width="0.9" height="1.3" fill="#f92672"/><rect x="24.2" y="220.6" width="0.9" height="1.3" fill="#f8f8f2"/><rect x="25.1" y="220.6" width="1.9" height="1.3" fill="#f8f8f2"/><rect x="27.9" y="220.6" width="0.9" height="1.3" fill="#f8f8f2"/><rect x="29.8" y="220.6" width="2.8" height="1.3" fill="#f8f8f2"/><rect x="33.5" y="220.6" width="3.7" height="1.3" fill="#f8f8f2"/><rect x="38.1" y="220.6" width="0.9" height="1.3" fill="#f8f8f2"/><rect x="40.0" y="220.6" width="5.6" height="1.3" fill="#f8f8f2"/><rect x="46.5" y="220.6" width="4.7" height="1.3" fill="#f8f8f2"/><rect x="52.1" y="220.6" width="2.8" height="1.3" fill="#f8f8f2"/><rect x="55.8" y="220.6" width="7.4" height="1.3" fill="#f8f8f2"/><rect x="63.2" y="220.6" width="1.9" height="1.3" fill="#f8f8f2"/><rect x="65.1" y="220.6" width="0.9" height="1.3" fill="#f92672"/><rect x="66.0" y="220.6" width="0.9" height="1.3" fill="#f8f8f2"/><rect x="18.6" y="222.6" width="1.9" height="1.3" fill="#f8f8f2"/><rect x="20.5" y="222.6" width="6.5" height="1.3" fill="#f92672"/><rect x="27.0" y="222.6" width="0.9" height="1.3" fill="#f8f8f2"/><rect x="14.9" y="224.6" width="1.9" height="1.3" fill="#f8f8f2"/><rect x="16.7" y="224.6" width="4.7" height="1.3" fill="#f92672"/><rect x="21.4" y="224.6" width="0.9" height="1.3" fill="#f8f8f2"/><rect x="14.9" y="228.6" width="0.9" height="1.3" fill="#f8f8f2"/><rect x="15.8" y="228.6" width="4.7" height="1.3" fill="#f92672"/><rect x="21.4" y="228.6" width="4.7" height="1.3" fill="#a6e22e"/><rect x="26.0" y="228.6" width="0.9" height="1.3" fill="#f8f8f2"/><rect x="27.0" y="228.6" width="14.9" height="1.3" fill="#e6db74"/><rect x="41.9" y="228.6" width="0.9" height="1.3" fill="#f8f8f2"/><rect x="18.6" y="230.6" width="0.9" height="1.3" fill="#f8f8f2"/><rect x="19.5" y="230.6" width="6.5" height="1.3" fill="#f92672"/><rect x="26.0" y="230.6" width="0.9" height="1.3" fill="#f8f8f2"/><rect x="22.3" y="232.6" width="0.9" height="1.3" fill="#f8f8f2"/><rect x="23.2" y="232.6" width="1.9" height="1.3" fill="#f92672"/><rect x="25.1" y="232.6" width="0.9" height="1.3" fill="#f8f8f2"/><rect x="26.0" y="232.6" width="6.5" height="1.3" fill="#f8f8f2"/><rect x="32.5" y="232.6" width="1.9" height="1.3" fill="#f8f8f2"/><rect x="34.4" y="232.6" width="1.9" height="1.3" fill="#f92672"/><rect x="36.3" y="232.6" width="0.9" height="1.3" fill="#f8f8f2"/><rect x="22.3" y="234.6" width="0.9" height="1.3" fill="#f8f8f2"/><rect x="23.2" y="234.6" width="0.9" height="1.3" fill="#f92672"/><rect x="24.2" y="234.6" width="0.9" height="1.3" fill="#f8f8f2"/><rect x="25.1" y="234.6" width="3.7" height="1.3" fill="#f8f8f2"/><rect x="29.8" y="234.6" width="8.4" height="1.3" fill="#f8f8f2"/><rect x="38.1" y="234.6" width="1.9" height="1.3" fill="#f8f8f2"/><rect x="40.0" y="234.6" width="0.9" height="1.3" fill="#f92672"/><rect x="40.9" y="234.6" width="0.9" height="1.3" fill="#f8f8f2"/><rect x="22.3" y="236.6" width="0.9" height="1.3" fill="#f8f8f2"/><rect x="23.2" y="236.6" width="1.9" height="1.3" fill="#f92672"/><rect x="25.1" y="236.6" width="0.9" height="1.3" fill="#f8f8f2"/><rect x="26.0" y="236.6" width="4.7" height="1.3" fill="#f8f8f2"/><rect x="30.7" y="236.6" width="1.9" height="1.3" fill="#f8f8f2"/><rect x="32.5" y="236.6" width="1.9" height="1.3" fill="#f92672"/><rect x="34.4" y="236.6" width="0.9" height="1.3" fill="#f8f8f2"/><rect x="22.3" y="238.6" width="0.9" height="1.3" fill="#f8f8f2"/><rect x="23.2" y="238.6" width="0.9" height="1.3" fill="#f92672"/><rect x="24.2" y="238.6" width="0.9" height="1.3" fill="#f8f8f2"/><rect x="25.1" y="238.6" width="3.7" height="1.3" fill="#f8f8f2"/><rect x="29.8" y="238.6" width="2.8" height="1.3" fill="#f8f8f2"/><rect x="33.5" y="238.6" width="3.7" height="1.3" fill="#f8f8f2"/><rect x="38.1" y="238.6" width="3.7" height="1.3" fill="#f8f8f2"/><rect x="42.8" y="238.6" width="4.7" height="1.3" fill="#f8f8f2"/><rect x="48.4" y="238.6" width="4.7" height="1.3" fill="#f8f8f2"/><rect x="53.9" y="238.6" width="1.9" height="1.3" fill="#f8f8f2"/><rect x="56.7" y="238.6" width="8.4" height="1.3" fill="#f8f8f2"/><rect x="66.0" y="238.6" width="3.7" height="1.3" fill="#f8f8f2"/><rect x="70.7" y="238.6" width="5.6" height="1.3" fill="#f8f8f2"/><rect x="77.2" y="238.6" width="5.6" height="1.3" fill="#f8f8f2"/><rect x="83.7" y="238.6" width="1.9" height="1.3" fill="#f8f8f2"/><rect x="86.5" y="238.6" width="3.7" height="1.3" fill="#f8f8f2"/><rect x="91.1" y="238.6" width="7.4" height="1.3" fill="#f8f8f2"/><rect x="99.5" y="238.6" width="6.5" height="1.3" fill="#f8f8f2"/><rect x="107.0" y="238.6" width="6.5" height="1.3" fill="#f8f8f2"/><rect x="114.4" y="238.6" width="3.7" height="1.3" fill="#f8f8f2"/><rect x="119.0" y="238.6" width="1.9" height="1.3" fill="#f8f8f2"/><rect x="121.8" y="238.6" width="8.4" height="1.3" fill="#f8f8f2"/><rect x="131.1" y="238.6" width="7.4" height="1.3" fill="#f8f8f2"/><rect x="139.5" y="238.6" width="4.7" height="1.3" fill="#f8f8f2"/><rect x="144.2" y="238.6" width="1.9" height="1.3" fill="#f8f8f2"/><rect x="146.0" y="238.6" width="0.9" height="1.3" fill="#f92672"/><rect x="146.9" y="238.6" width="0.9" height="1.3" fill="#f8f8f2"/><rect x="22.3" y="240.6" width="0.9" height="1.3" fill="#f8f8f2"/><rect x="23.2" y="240.6" width="0.9" height="1.3" fill="#f92672"/><rect x="24.2" y="240.6" width="0.9" height="1.3" fill="#f8f8f2"/><rect x="25.1" y="240.6" width="7.4" height="1.3" fill="#f8f8f2"/><rect x="33.5" y="240.6" width="7.4" height="1.3" fill="#f8f8f2"/><rect x="41.8" y="240.6" width="2.8" height="1.3" fill="#f8f8f2"/><rect x="45.6" y="240.6" width="8.4" height="1.3" fill="#f8f8f2"/><rect x="54.9" y="240.6" width="7.4" height="1.3" fill="#f8f8f2"/><rect x="63.2" y="240.6" width="1.9" height="1.3" fill="#f8f8f2"/><rect x="66.0" y="240.6" width="3.7" height="1.3" fill="#f8f8f2"/><rect x="69.8" y="240.6" width="1.9" height="1.3" fill="#f8f8f2"/><rect x="71.6" y="240.6" width="0.9" height="1.3" fill="#f92672"/><rect x="72.5" y="240.6" width="0.9" height="1.3" fill="#f8f8f2"/><rect x="18.6" y="244.6" width="1.9" height="1.3" fill="#f8f8f2"/><rect x="20.5" y="244.6" width="6.5" height="1.3" fill="#f92672"/><rect x="27.0" y="244.6" width="0.9" height="1.3" fill="#f8f8f2"/><rect x="14.9" y="246.6" width="1.9" height="1.3" fill="#f8f8f2"/><rect x="16.7" y="246.6" width="4.7" height="1.3" fill="#f92672"/><rect x="21.4" y="246.6" width="0.9" height="1.3" fill="#f8f8f2"/><rect x="14.9" y="250.6" width="0.9" height="1.3" fill="#f8f8f2"/><rect x="15.8" y="250.6" width="4.7" height="1.3" fill="#f92672"/><rect x="21.4" y="250.6" width="4.7" height="1.3" fill="#a6e22e"/><rect x="26.0" y="250.6" width="0.9" height="1.3" fill="#f8f8f2"/><rect x="27.0" y="250.6" width="14.9" height="1.3" fill="#e6db74"/><rect x="41.9" y="250.6" width="0.9" height="1.3" fill="#f8f8f2"/><rect x="18.6" y="252.6" width="0.9" height="1.3" fill="#f8f8f2"/><rect x="19.5" y="252.6" width="6.5" height="1.3" fill="#f92672"/><rect x="26.0" y="252.6" width="0.9" height="1.3" fill="#f8f8f2"/><rect x="22.3" y="254.6" width="0.9" height="1.3" fill="#f8f8f2"/><rect x="23.2" y="254.6" width="1.9" height="1.3" fill="#f92672"/><rect x="25.1" y="254.6" width="0.9" height="1.3" fill="#f8f8f2"/><rect x="26.0" y="254.6" width="2.8" height="1.3" fill="#f8f8f2"/><rect x="29.8" y="254.6" width="2.8" height="1.3" fill="#f8f8f2"/><rect x="33.5" y="254.6" width="6.5" height="1.3" fill="#f8f8f2"/><rect x="40.0" y="254.6" width="1.9" height="1.3" fill="#f8f8f2"/><rect x="41.8" y="254.6" width="1.9" height="1.3" fill="#f92672"/><rect x="43.7" y="254.6" width="0.9" height="1.3" fill="#f8f8f2"/><rect x="22.3" y="256.6" width="0.9" height="1.3" fill="#f8f8f2"/><rect x="23.2" y="256.6" width="5.6" height="1.3" fill="#f92672"/><rect x="29.8" y="256.6" width="2.8" height="1.3" fill="#a6e22e"/><rect x="32.5" y="256.6" width="0.9" height="1.3" fill="#f8f8f2"/><rect x="33.5" y="256.6" width="117.5" height="1.3" fill="#e6db74"/><rect x="22.3" y="258.6" width="128.7" height="1.3" fill="#e6db74"/><rect x="18.6" y="260.6" width="1.9" height="1.3" fill="#f8f8f2"/><rect x="20.5" y="260.6" width="6.5" height="1.3" fill="#f92672"/><rect x="27.0" y="260.6" width="0.9" height="1.3" fill="#f8f8f2"/><rect x="14.9" y="262.6" width="1.9" height="1.3" fill="#f8f8f2"/><rect x="16.7" y="262.6" width="4.7" height="1.3" fill="#f92672"/><rect x="21.4" y="262.6" width="0.9" height="1.3" fill="#f8f8f2"/><rect x="3.7" y="264.6" width="1.9" height="1.3" fill="#f8f8f2"/><rect x="5.6" y="264.6" width="2.8" height="1.3" fill="#f92672"/><rect x="8.4" y="264.6" width="0.9" height="1.3" fill="#f8f8f2"/><rect x="3.7" y="268.6" width="0.9" height="1.3" fill="#f8f8f2"/><rect x="4.7" y="268.6" width="5.6" height="1.3" fill="#f92672"/><rect x="11.2" y="268.6" width="4.7" height="1.3" fill="#a6e22e"/><rect x="15.8" y="268.6" width="0.9" height="1.3" fill="#f8f8f2"/><rect x="16.7" y="268.6" width="11.2" height="1.3" fill="#e6db74"/><rect x="27.9" y="268.6" width="0.9" height="1.3" fill="#f8f8f2"/><rect x="7.4" y="270.6" width="0.9" height="1.3" fill="#f8f8f2"/><rect x="8.4" y="270.6" width="0.9" height="1.3" fill="#f92672"/><rect x="9.3" y="270.6" width="0.9" height="1.3" fill="#f8f8f2"/><rect x="10.2" y="270.6" width="8.4" height="1.3" fill="#f8f8f2"/><rect x="19.5" y="270.6" width="5.6" height="1.3" fill="#f8f8f2"/><rect x="26.0" y="270.6" width="3.7" height="1.3" fill="#f8f8f2"/><rect x="30.7" y="270.6" width="0.9" height="1.3" fill="#f8f8f2"/><rect x="31.6" y="270.6" width="0.9" height="1.3" fill="#f92672"/><rect x="33.5" y="270.6" width="3.7" height="1.3" fill="#a6e22e"/><rect x="37.2" y="270.6" width="0.9" height="1.3" fill="#f8f8f2"/><rect x="38.1" y="270.6" width="2.8" height="1.3" fill="#e6db74"/><rect x="40.9" y="270.6" width="0.9" height="1.3" fill="#f8f8f2"/><rect x="41.8" y="270.6" width="3.7" height="1.3" fill="#f8f8f2"/><rect x="46.5" y="270.6" width="4.7" height="1.3" fill="#f8f8f2"/><rect x="51.1" y="270.6" width="1.9" height="1.3" fill="#f8f8f2"/><rect x="53.0" y="270.6" width="0.9" height="1.3" fill="#f92672"/><rect x="53.9" y="270.6" width="0.9" height="1.3" fill="#f8f8f2"/><rect x="54.9" y="270.6" width="1.9" height="1.3" fill="#f8f8f2"/><rect x="56.7" y="270.6" width="0.9" height="1.3" fill="#f92672"/><rect x="57.7" y="270.6" width="0.9" height="1.3" fill="#f8f8f2"/><rect x="3.7" y="272.6" width="1.9" height="1.3" fill="#f8f8f2"/><rect x="5.6" y="272.6" width="5.6" height="1.3" fill="#f92672"/><rect x="11.2" y="272.6" width="0.9" height="1.3" fill="#f8f8f2"/><rect x="0.0" y="276.6" width="1.9" height="1.3" fill="#f8f8f2"/><rect x="1.9" y="276.6" width="3.7" height="1.3" fill="#f92672"/><rect x="5.6" y="276.6" width="0.9" height="1.3" fill="#f8f8f2"/><rect x="0.0" y="278.6" width="1.9" height="1.3" fill="#f8f8f2"/><rect x="1.9" y="278.6" width="3.7" height="1.3" fill="#f92672"/><rect x="5.6" y="278.6" width="0.9" height="1.3" fill="#f8f8f2"/></svg>
<div id="status"><span style="left:4px;letter-spacing:-0.168px">Line 39, Column 37</span><i style="left:1726px"></i><span style="left:1747.5px;letter-spacing:-0.399px">Tab Size: 4</span><i style="left:1821px"></i><span style="left:1854.4px;letter-spacing:-1.026px">HTML</span></div>
<div id="task"><div id="search">Prohledat web a Windows</div>
<div id="wp"></div><span id="wpt">WALLPAPERSWIDE.COM</span>
<svg id="tbi" width="1920" height="40" viewBox="0 0 1920 40">
<defs>
<radialGradient id="gk" cx="0.5" cy="0.5" r="0.5"><stop offset="0" stop-color="#0b1d6b"/><stop offset="0.6" stop-color="#1f4fc0"/><stop offset="0.85" stop-color="#9fd0ff"/><stop offset="1" stop-color="#1b3c9a"/></radialGradient>
<radialGradient id="gg" cx="0.4" cy="0.4" r="0.6"><stop offset="0" stop-color="#b9f59a"/><stop offset="0.5" stop-color="#3fae2a"/><stop offset="1" stop-color="#14520f"/></radialGradient>
<linearGradient id="gs2" x1="0" y1="0" x2="0" y2="1"><stop offset="0" stop-color="#6e6e6e"/><stop offset="0.8" stop-color="#3a3a3a"/><stop offset="1" stop-color="#222"/></linearGradient>
<linearGradient id="ggame" x1="0" y1="0" x2="1" y2="1"><stop offset="0" stop-color="#4a4a52"/><stop offset="0.5" stop-color="#8a8a90"/><stop offset="1" stop-color="#3a3336"/></linearGradient>
</defs>
<!-- start -->
<rect x="0" y="0" width="48" height="40" fill="#121212"/>
<g fill="#dcdcdc">
<path d="M16,14.3 L22.6,13.4 V19.6 H16 Z"/><path d="M23.5,13.25 L32.4,12 V19.6 H23.5 Z"/>
<path d="M16,20.5 H22.6 V26.7 L16,25.8 Z"/><path d="M23.5,20.5 H32.4 V28 L23.5,26.8 Z"/>
</g>
<!-- task view -->
<g fill="none" stroke="#fff" stroke-width="1.3">
<rect x="386.4" y="13.2" width="11.2" height="13.6"/>
<path d="M384.3,15.2 H382.4 V24.8 H384.3 M399.7,15.2 H401.6 V24.8 H399.7"/>
</g>
<!-- explorer -->
<path d="M431,12 H439 L441,14 H452.5 V29 H431 Z" fill="#f6d35a"/>
<path d="M431,16.5 H452.5 V29 H431 Z" fill="#fbe17a"/>
<path d="M435.5,29 V21 H447.5 V29 H444.5 V24.5 H438.5 V29 Z" fill="#4fb8ea"/>
<rect x="435.5" y="20" width="12" height="2" fill="#7fd0f5"/>
<!-- chrome -->
<circle cx="491" cy="19" r="11" fill="#e33b2e"/>
<path d="M491,19 L481.47,13.5 A11,11 0 0 0 485.5,28.53 Z" fill="#2ea043"/>
<path d="M481.47,13.5 A11,11 0 0 0 485.5,28.53 L491,19 Z" fill="#2ea043"/>
<path d="M485.5,28.53 A11,11 0 0 0 500.53,13.5 L491,19 Z" fill="#f7cb2d"/>
<path d="M491,8 A11,11 0 0 1 500.53,13.5 L491,13.5 Z" fill="#e33b2e"/>
<path d="M481.47,13.5 A11,11 0 0 1 500.53,13.5 L491,19 Z" fill="#e33b2e"/>
<circle cx="491" cy="19" r="5.3" fill="#f3f3f3"/>
<circle cx="491" cy="19" r="4.1" fill="#4a8df0"/>
<!-- skype -->
<circle cx="540" cy="19" r="9.6" fill="#12a5e6"/>
<circle cx="534.6" cy="13.6" r="5.4" fill="#12a5e6"/>
<circle cx="545.4" cy="24.6" r="5.4" fill="#12a5e6"/>
<text x="540" y="24.6" font-family="Liberation Sans, sans-serif" font-weight="bold" font-size="15.5" fill="#fff" text-anchor="middle">S</text>
<!-- game -->
<rect x="577.5" y="8.3" width="23" height="23.2" fill="#3b3b44"/>
<rect x="578.5" y="9.3" width="21" height="21.2" fill="#d9dae2"/>
<path d="M582,13 L584,9.5 L592,9.3 L593.5,13 L592.5,17 L594,20 L597,23 L599.5,25 V30.5 H590 L588.5,26 L586,30.5 H580.5 L582.5,23 L583.5,18 Z" fill="#2a2b33"/>
<path d="M585.5,14 L590.5,13.5 L590.8,19 L588.5,22 L586,19.5 Z" fill="#8f9098"/>
<path d="M588.3,19 L589.6,19 L589.6,25 L588.3,25 Z" fill="#e8e8ee"/>
<path d="M592,22 L599.5,25 V30.5 H593 Z" fill="#4a2f33"/>
<path d="M596,27 L599.5,26.5 V30.5 H596.5 Z" fill="#c98a7c"/>
<path d="M579,28.3 H590 V29.3 H579 Z" fill="#f2f2f6"/>
<!-- green orb -->
<circle cx="638" cy="20.3" r="10.8" fill="url(#gg)"/>
<circle cx="638" cy="20.3" r="10.3" fill="none" stroke="#d9e6d9" stroke-width="1.3" opacity="0.8"/>
<path d="M627,11.8 L640.5,16.5 L644.5,15 L642.2,19.6 L645,27 L638.8,21.6 L634.5,26.8 L635.5,20 Z" fill="#eef2ee" opacity="0.95"/>
<path d="M636,24 L638.5,21.8 L641,25 L638.3,27.5 Z" fill="#175c12"/>
<!-- calc -->
<rect x="675" y="8" width="24" height="24" fill="#4f4f4f"/>
<rect x="682.6" y="13.6" width="9" height="13" fill="none" stroke="#e8e8e8" stroke-width="1.1"/>
<rect x="684.3" y="15.3" width="5.6" height="2" fill="#e8e8e8"/>
<g fill="#e8e8e8"><rect x="684.3" y="19" width="1.4" height="1.4"/><rect x="686.4" y="19" width="1.4" height="1.4"/><rect x="688.5" y="19" width="1.4" height="1.4"/><rect x="684.3" y="21.3" width="1.4" height="1.4"/><rect x="686.4" y="21.3" width="1.4" height="1.4"/><rect x="688.5" y="21.3" width="1.4" height="1.4"/><rect x="684.3" y="23.6" width="1.4" height="1.4"/><rect x="686.4" y="23.6" width="1.4" height="1.4"/><rect x="688.5" y="23.6" width="1.4" height="1.4"/></g>
<!-- K -->
<rect x="724" y="8" width="24" height="24" fill="#000"/>
<circle cx="736" cy="20" r="10" fill="url(#gk)"/>
<text x="736.4" y="25.6" font-family="Liberation Sans, sans-serif" font-weight="bold" font-size="15" fill="#fff" stroke="#000" stroke-width="0.7" paint-order="stroke" text-anchor="middle">K</text>
<!-- sublime active -->
<rect x="761" y="0" width="48" height="40" fill="#2c2c2c"/>
<rect x="773" y="9.5" width="23" height="19.5" rx="2.5" fill="#f4f4f4"/>
<rect x="774.6" y="10" width="19.8" height="14.8" rx="1.5" fill="url(#gs2)"/>
<rect x="774.6" y="24.6" width="19.8" height="1" fill="#9a9a9a"/>
<text x="784.6" y="22.2" font-family="Liberation Sans, sans-serif" font-weight="bold" font-size="13.5" fill="#f2912a" text-anchor="middle">S</text>
<!-- globe -->
<rect x="822" y="8" width="24" height="24" fill="#0a78d6"/>
<g fill="none" stroke="#fff" stroke-width="1.1"><circle cx="834" cy="20" r="6.4"/><ellipse cx="834" cy="20" rx="2.8" ry="6.4"/><path d="M828,17.6 H840 M828,22.4 H840"/></g>
<!-- paint -->
<path d="M871.5,24 C870.5,17 876,13.5 882,13.5 C889,13.5 893.5,17.5 892.5,22.5 C891.8,26.5 888,25 886.5,26.5 C885,28 886.5,30.5 882.5,30.8 C877,31.2 872.3,28.5 871.5,24 Z" fill="#dfe7ef" stroke="#9fb0c4" stroke-width="0.7"/>
<circle cx="876" cy="20.2" r="1.8" fill="#d9503c"/><circle cx="880.4" cy="17" r="1.8" fill="#7fb743"/><circle cx="885.6" cy="16.6" r="1.8" fill="#e3a12f"/><circle cx="881.5" cy="25.6" r="1.7" fill="#2a2f3a"/>
<path d="M893.6,9 L895,10 L886.2,30.6 L884.6,30 Z" fill="#d9a25e"/>
<path d="M892.2,8.2 L895.6,8.6 L895,12 L892.6,12 Z" fill="#f3d9b0"/>
<!-- indicators -->
<g fill="#7b7b7b"><rect x="422" y="38" width="40" height="2"/><rect x="471" y="38" width="40" height="2"/><rect x="520" y="38" width="40" height="2"/><rect x="761" y="38" width="48" height="2"/><rect x="814" y="38" width="40" height="2"/><rect x="863" y="38" width="31.5" height="2"/><rect x="895.5" y="38" width="7.5" height="2"/></g>
<!-- tray -->
<path d="M1748.4,22.2 H1756 L1752.2,18.2 Z" fill="#fff"/>
<g fill="none" stroke="#fff" stroke-width="1.1">
<path d="M1773.6,15.4 H1785.4 V23.4 H1773.6 Z M1779.5,23.4 V26 M1775.4,26.3 H1783.6"/>
<rect x="1770.2" y="14" width="3.6" height="3.6" fill="#111"/>
<path d="M1772,17.6 V26.3 H1775.4"/>
</g>
<g fill="none" stroke="#fff" stroke-width="1.1">
<path d="M1794.6,17.2 H1797.2 L1800.6,13.8 V26.2 L1797.2,22.8 H1794.6 Z"/>
<path d="M1803,17.4 C1804.2,18.8 1804.2,21.2 1803,22.6"/>
<path d="M1805.4,15.4 C1807.6,17.8 1807.6,22.2 1805.4,24.6"/>
<path d="M1807.8,13.6 C1811,17.2 1811,22.8 1807.8,26.4"/>
</g>
<path d="M1820,12 H1836 V24 H1830.6 L1828,27.4 L1825.4,24 H1820 Z" fill="#fff"/>
<path d="M1822.4,15 H1833.6 M1822.4,17.6 H1833.6 M1822.4,20.2 H1830" stroke="#111" stroke-width="1"/>
<rect x="1915" y="0" width="1" height="40" fill="#3c3c3c"/>
</svg>

<span class="clk" style="left:1864px;top:4px;letter-spacing:-0.606px">22:46</span>
<span class="clk" style="left:1850px;top:22px;letter-spacing:-0.606px">25.05.2015</span>
</div>
</body>
</html>
